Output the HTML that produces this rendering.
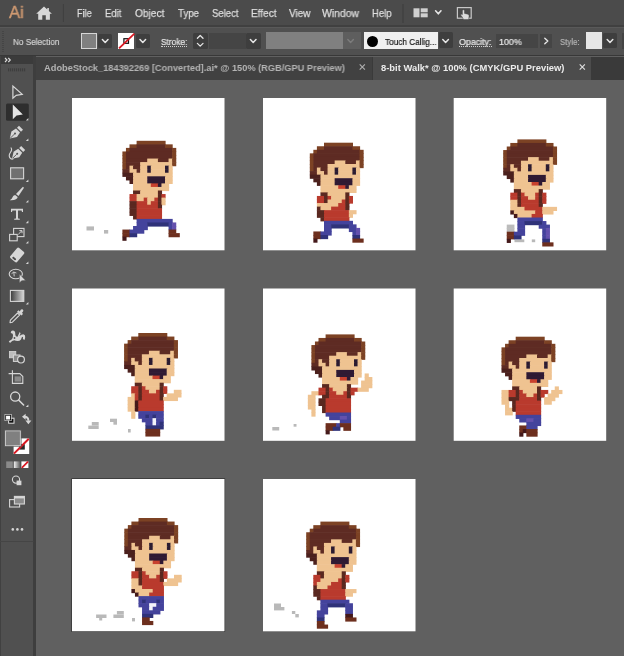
<!DOCTYPE html>
<html><head><meta charset="utf-8"><title>Illustrator</title>
<style>
html,body{margin:0;padding:0}
body{width:624px;height:656px;overflow:hidden;background:#606060;position:relative;font-family:"Liberation Sans",sans-serif}
.abs{position:absolute}
.t{position:absolute;white-space:nowrap;transform-origin:0 50%;line-height:1;will-change:transform;}
.canvas{position:absolute;left:0;top:0}
#menubar{left:0;top:0;width:624px;height:26px;background:#4b4b4b}
#mline{left:0;top:24.8px;width:624px;height:2.6px;background:#404040}
#ctrl{left:0;top:27.4px;width:624px;height:28px;background:#505050;border-top:1.4px solid #595959;box-sizing:border-box}
#cline{left:0;top:54.6px;width:624px;height:1.6px;background:#383838}
#tabbar{left:35px;top:56.5px;width:589px;height:23px;background:#3a3a3a}
#tab1{left:35px;top:56.5px;width:336.5px;height:23px;background:#414141}
#tab2{left:372.5px;top:56.5px;width:218px;height:23px;background:#4c4c4c}
#tools{left:0;top:56px;width:34px;height:600px;background:#505050}
#toolhdr{left:0;top:56px;width:34px;height:8px;background:#3b3b3b}
#toolbrd{left:33.3px;top:56px;width:2.3px;height:600px;background:#3e3e3e}
#tooledge{left:0;top:56px;width:1px;height:600px;background:#414141}
.dd{position:absolute;background:#3e3e3e;border-radius:1.5px}
.inp{position:absolute;background:#454545}
</style></head><body>
<svg class="canvas" style="filter:blur(0.35px)" width="624" height="656" viewBox="0 0 624 656" shape-rendering="geometricPrecision">
<rect x="72" y="98" width="152.5" height="152.3" fill="#ffffff"/>
<rect x="263" y="98" width="152.5" height="152.3" fill="#ffffff"/>
<rect x="453.7" y="98" width="152.5" height="152.3" fill="#ffffff"/>
<rect x="72" y="288.5" width="152.5" height="152.3" fill="#ffffff"/>
<rect x="263" y="288.5" width="152.5" height="152.3" fill="#ffffff"/>
<rect x="453.7" y="288.5" width="152.5" height="152.3" fill="#ffffff"/>
<rect x="71.4" y="478.4" width="153.7" height="153.5" fill="#2a2a2a"/>
<rect x="72" y="479" width="152.5" height="152.3" fill="#ffffff"/>
<rect x="263" y="479" width="152.5" height="152.3" fill="#ffffff"/>
<rect x="86.5" y="226.4" width="7.5" height="4.1" fill="#b9b9b9"/>
<rect x="104.0" y="230.0" width="4.2" height="3.6" fill="#b9b9b9"/>
<rect x="110.0" y="418.7" width="7.0" height="3.3" fill="#b9b9b9"/>
<rect x="113.4" y="422.0" width="3.6" height="2.7" fill="#b9b9b9"/>
<rect x="91.8" y="422.0" width="6.9" height="3.6" fill="#b9b9b9"/>
<rect x="88.3" y="425.6" width="10.4" height="3.4" fill="#b9b9b9"/>
<rect x="128.0" y="429.0" width="2.7" height="3.5" fill="#b9b9b9"/>
<rect x="514.5" y="239.4" width="9.8" height="2.8" fill="#b9b9b9"/>
<rect x="531.8" y="239.4" width="3.4" height="2.8" fill="#b9b9b9"/>
<rect x="272.3" y="427.0" width="6.9" height="3.5" fill="#b9b9b9"/>
<rect x="293.6" y="424.0" width="2.9" height="2.7" fill="#b9b9b9"/>
<rect x="96.1" y="614.5" width="10.4" height="3.5" fill="#b9b9b9"/>
<rect x="99.2" y="618.0" width="3.0" height="2.5" fill="#b9b9b9"/>
<rect x="116.9" y="611.0" width="6.9" height="3.5" fill="#b9b9b9"/>
<rect x="113.4" y="614.5" width="10.4" height="3.5" fill="#b9b9b9"/>
<rect x="132.0" y="618.0" width="3.0" height="3.4" fill="#b9b9b9"/>
<rect x="274.0" y="603.5" width="7.0" height="3.5" fill="#b9b9b9"/>
<rect x="274.0" y="607.0" width="10.4" height="3.4" fill="#b9b9b9"/>
<rect x="291.9" y="611.0" width="3.4" height="3.0" fill="#b9b9b9"/>
<rect x="295.3" y="614.0" width="3.5" height="3.4" fill="#b9b9b9"/>
<rect x="136.60" y="140.80" width="29.00" height="4.15" fill="#7c4224"/>
<rect x="129.50" y="144.35" width="7.70" height="4.15" fill="#7c4224"/>
<rect x="136.60" y="144.35" width="29.00" height="4.15" fill="#5e2b23"/>
<rect x="165.00" y="144.35" width="7.70" height="4.15" fill="#7c4224"/>
<rect x="125.95" y="147.90" width="4.15" height="4.15" fill="#7c4224"/>
<rect x="129.50" y="147.90" width="43.20" height="4.15" fill="#5e2b23"/>
<rect x="172.10" y="147.90" width="4.15" height="4.15" fill="#7c4224"/>
<rect x="122.40" y="151.45" width="4.15" height="4.15" fill="#7c4224"/>
<rect x="125.95" y="151.45" width="46.75" height="4.15" fill="#5e2b23"/>
<rect x="172.10" y="151.45" width="4.15" height="4.15" fill="#7c4224"/>
<rect x="122.40" y="155.00" width="4.15" height="4.15" fill="#7c4224"/>
<rect x="125.95" y="155.00" width="46.75" height="4.15" fill="#5e2b23"/>
<rect x="172.10" y="155.00" width="4.15" height="4.15" fill="#7c4224"/>
<rect x="122.40" y="158.55" width="4.15" height="4.15" fill="#7c4224"/>
<rect x="125.95" y="158.55" width="21.90" height="4.15" fill="#5e2b23"/>
<rect x="147.25" y="158.55" width="11.25" height="4.15" fill="#efc391"/>
<rect x="157.90" y="158.55" width="11.25" height="4.15" fill="#5e2b23"/>
<rect x="168.55" y="158.55" width="4.15" height="4.15" fill="#efc391"/>
<rect x="172.10" y="158.55" width="4.15" height="4.15" fill="#7c4224"/>
<rect x="122.40" y="162.10" width="4.15" height="4.15" fill="#7c4224"/>
<rect x="125.95" y="162.10" width="14.80" height="4.15" fill="#5e2b23"/>
<rect x="140.15" y="162.10" width="32.55" height="4.15" fill="#efc391"/>
<rect x="172.10" y="162.10" width="4.15" height="4.15" fill="#7c4224"/>
<rect x="122.40" y="165.65" width="4.15" height="4.15" fill="#7c4224"/>
<rect x="125.95" y="165.65" width="4.15" height="4.15" fill="#5e2b23"/>
<rect x="129.50" y="165.65" width="4.15" height="4.15" fill="#efc391"/>
<rect x="133.05" y="165.65" width="7.70" height="4.15" fill="#5e2b23"/>
<rect x="140.15" y="165.65" width="7.70" height="4.15" fill="#efc391"/>
<rect x="147.25" y="165.65" width="4.15" height="4.15" fill="#2b1b31"/>
<rect x="150.80" y="165.65" width="14.80" height="4.15" fill="#efc391"/>
<rect x="165.00" y="165.65" width="4.15" height="4.15" fill="#2b1b31"/>
<rect x="168.55" y="165.65" width="4.15" height="4.15" fill="#efc391"/>
<rect x="122.40" y="169.20" width="7.70" height="4.15" fill="#5e2b23"/>
<rect x="129.50" y="169.20" width="7.70" height="4.15" fill="#efc391"/>
<rect x="136.60" y="169.20" width="4.15" height="4.15" fill="#5e2b23"/>
<rect x="140.15" y="169.20" width="7.70" height="4.15" fill="#efc391"/>
<rect x="147.25" y="169.20" width="4.15" height="4.15" fill="#2b1b31"/>
<rect x="150.80" y="169.20" width="14.80" height="4.15" fill="#efc391"/>
<rect x="165.00" y="169.20" width="4.15" height="4.15" fill="#2b1b31"/>
<rect x="168.55" y="169.20" width="4.15" height="4.15" fill="#efc391"/>
<rect x="122.40" y="172.75" width="11.25" height="4.15" fill="#4b201d"/>
<rect x="133.05" y="172.75" width="39.65" height="4.15" fill="#efc391"/>
<rect x="125.95" y="176.30" width="7.70" height="4.15" fill="#4b201d"/>
<rect x="133.05" y="176.30" width="14.80" height="4.15" fill="#efc391"/>
<rect x="147.25" y="176.30" width="18.35" height="4.15" fill="#2f1a33"/>
<rect x="165.00" y="176.30" width="7.70" height="4.15" fill="#efc391"/>
<rect x="129.50" y="179.85" width="4.15" height="4.15" fill="#4b201d"/>
<rect x="133.05" y="179.85" width="14.80" height="4.15" fill="#efc391"/>
<rect x="147.25" y="179.85" width="18.35" height="4.15" fill="#2f1a33"/>
<rect x="165.00" y="179.85" width="7.70" height="4.15" fill="#efc391"/>
<rect x="133.05" y="183.40" width="18.35" height="4.15" fill="#efc391"/>
<rect x="150.80" y="183.40" width="7.70" height="4.15" fill="#c8412e"/>
<rect x="157.90" y="183.40" width="4.15" height="4.15" fill="#2f1a33"/>
<rect x="161.45" y="183.40" width="7.70" height="4.15" fill="#efc391"/>
<rect x="133.05" y="186.95" width="36.10" height="4.15" fill="#efc391"/>
<rect x="133.05" y="190.50" width="7.70" height="4.15" fill="#5a2820"/>
<rect x="140.15" y="190.50" width="18.35" height="4.15" fill="#efc391"/>
<rect x="157.90" y="190.50" width="4.15" height="4.15" fill="#5a2820"/>
<rect x="129.50" y="194.05" width="7.70" height="4.15" fill="#b93a2d"/>
<rect x="136.60" y="194.05" width="21.90" height="4.15" fill="#efc391"/>
<rect x="157.90" y="194.05" width="4.15" height="4.15" fill="#5a2820"/>
<rect x="161.45" y="194.05" width="4.15" height="4.15" fill="#b93a2d"/>
<rect x="129.50" y="197.60" width="7.70" height="4.15" fill="#b93a2d"/>
<rect x="136.60" y="197.60" width="7.70" height="4.15" fill="#efc391"/>
<rect x="143.70" y="197.60" width="4.15" height="4.15" fill="#b93a2d"/>
<rect x="147.25" y="197.60" width="7.70" height="4.15" fill="#efc391"/>
<rect x="154.35" y="197.60" width="4.15" height="4.15" fill="#b93a2d"/>
<rect x="157.90" y="197.60" width="4.15" height="4.15" fill="#5a2820"/>
<rect x="161.45" y="197.60" width="4.15" height="4.15" fill="#efc391"/>
<rect x="129.50" y="201.15" width="7.70" height="4.15" fill="#5a2820"/>
<rect x="136.60" y="201.15" width="11.25" height="4.15" fill="#b93a2d"/>
<rect x="147.25" y="201.15" width="4.15" height="4.15" fill="#efc391"/>
<rect x="150.80" y="201.15" width="7.70" height="4.15" fill="#b93a2d"/>
<rect x="157.90" y="201.15" width="4.15" height="4.15" fill="#5a2820"/>
<rect x="161.45" y="201.15" width="4.15" height="4.15" fill="#efc391"/>
<rect x="129.50" y="204.70" width="7.70" height="4.15" fill="#5a2820"/>
<rect x="136.60" y="204.70" width="21.90" height="4.15" fill="#b93a2d"/>
<rect x="157.90" y="204.70" width="4.15" height="4.15" fill="#5a2820"/>
<rect x="129.50" y="208.25" width="7.70" height="4.15" fill="#5a2820"/>
<rect x="136.60" y="208.25" width="25.45" height="4.15" fill="#b93a2d"/>
<rect x="129.50" y="211.80" width="7.70" height="4.15" fill="#5a2820"/>
<rect x="136.60" y="211.80" width="25.45" height="4.15" fill="#b93a2d"/>
<rect x="133.05" y="215.35" width="4.15" height="4.15" fill="#5a2820"/>
<rect x="136.60" y="215.35" width="25.45" height="4.15" fill="#b93a2d"/>
<rect x="136.60" y="218.90" width="36.10" height="4.15" fill="#44439c"/>
<rect x="136.60" y="222.45" width="11.25" height="4.15" fill="#44439c"/>
<rect x="147.25" y="222.45" width="21.90" height="4.15" fill="#2f3279"/>
<rect x="168.55" y="222.45" width="4.15" height="4.15" fill="#44439c"/>
<rect x="172.10" y="222.45" width="4.15" height="4.15" fill="#6451ad"/>
<rect x="133.05" y="226.00" width="14.80" height="4.15" fill="#44439c"/>
<rect x="168.55" y="226.00" width="4.15" height="4.15" fill="#44439c"/>
<rect x="172.10" y="226.00" width="4.15" height="4.15" fill="#6451ad"/>
<rect x="122.40" y="229.55" width="7.70" height="4.15" fill="#6d2f1e"/>
<rect x="129.50" y="229.55" width="14.80" height="4.15" fill="#44439c"/>
<rect x="168.55" y="229.55" width="7.70" height="4.15" fill="#6d2f1e"/>
<rect x="122.40" y="233.10" width="7.70" height="4.15" fill="#6d2f1e"/>
<rect x="129.50" y="233.10" width="7.70" height="4.15" fill="#2f3279"/>
<rect x="168.55" y="233.10" width="11.25" height="4.15" fill="#6d2f1e"/>
<rect x="122.40" y="236.65" width="4.15" height="4.15" fill="#44191a"/>
<rect x="324.00" y="142.70" width="29.00" height="4.15" fill="#7c4224"/>
<rect x="316.90" y="146.25" width="7.70" height="4.15" fill="#7c4224"/>
<rect x="324.00" y="146.25" width="29.00" height="4.15" fill="#5e2b23"/>
<rect x="352.40" y="146.25" width="7.70" height="4.15" fill="#7c4224"/>
<rect x="313.35" y="149.80" width="4.15" height="4.15" fill="#7c4224"/>
<rect x="316.90" y="149.80" width="43.20" height="4.15" fill="#5e2b23"/>
<rect x="359.50" y="149.80" width="4.15" height="4.15" fill="#7c4224"/>
<rect x="309.80" y="153.35" width="4.15" height="4.15" fill="#7c4224"/>
<rect x="313.35" y="153.35" width="46.75" height="4.15" fill="#5e2b23"/>
<rect x="359.50" y="153.35" width="4.15" height="4.15" fill="#7c4224"/>
<rect x="309.80" y="156.90" width="4.15" height="4.15" fill="#7c4224"/>
<rect x="313.35" y="156.90" width="46.75" height="4.15" fill="#5e2b23"/>
<rect x="359.50" y="156.90" width="4.15" height="4.15" fill="#7c4224"/>
<rect x="309.80" y="160.45" width="4.15" height="4.15" fill="#7c4224"/>
<rect x="313.35" y="160.45" width="21.90" height="4.15" fill="#5e2b23"/>
<rect x="334.65" y="160.45" width="11.25" height="4.15" fill="#efc391"/>
<rect x="345.30" y="160.45" width="11.25" height="4.15" fill="#5e2b23"/>
<rect x="355.95" y="160.45" width="4.15" height="4.15" fill="#efc391"/>
<rect x="359.50" y="160.45" width="4.15" height="4.15" fill="#7c4224"/>
<rect x="309.80" y="164.00" width="4.15" height="4.15" fill="#7c4224"/>
<rect x="313.35" y="164.00" width="14.80" height="4.15" fill="#5e2b23"/>
<rect x="327.55" y="164.00" width="32.55" height="4.15" fill="#efc391"/>
<rect x="359.50" y="164.00" width="4.15" height="4.15" fill="#7c4224"/>
<rect x="309.80" y="167.55" width="4.15" height="4.15" fill="#7c4224"/>
<rect x="313.35" y="167.55" width="4.15" height="4.15" fill="#5e2b23"/>
<rect x="316.90" y="167.55" width="4.15" height="4.15" fill="#efc391"/>
<rect x="320.45" y="167.55" width="7.70" height="4.15" fill="#5e2b23"/>
<rect x="327.55" y="167.55" width="7.70" height="4.15" fill="#efc391"/>
<rect x="334.65" y="167.55" width="4.15" height="4.15" fill="#2b1b31"/>
<rect x="338.20" y="167.55" width="14.80" height="4.15" fill="#efc391"/>
<rect x="352.40" y="167.55" width="4.15" height="4.15" fill="#2b1b31"/>
<rect x="355.95" y="167.55" width="4.15" height="4.15" fill="#efc391"/>
<rect x="309.80" y="171.10" width="7.70" height="4.15" fill="#5e2b23"/>
<rect x="316.90" y="171.10" width="7.70" height="4.15" fill="#efc391"/>
<rect x="324.00" y="171.10" width="4.15" height="4.15" fill="#5e2b23"/>
<rect x="327.55" y="171.10" width="7.70" height="4.15" fill="#efc391"/>
<rect x="334.65" y="171.10" width="4.15" height="4.15" fill="#2b1b31"/>
<rect x="338.20" y="171.10" width="14.80" height="4.15" fill="#efc391"/>
<rect x="352.40" y="171.10" width="4.15" height="4.15" fill="#2b1b31"/>
<rect x="355.95" y="171.10" width="4.15" height="4.15" fill="#efc391"/>
<rect x="309.80" y="174.65" width="11.25" height="4.15" fill="#4b201d"/>
<rect x="320.45" y="174.65" width="39.65" height="4.15" fill="#efc391"/>
<rect x="313.35" y="178.20" width="7.70" height="4.15" fill="#4b201d"/>
<rect x="320.45" y="178.20" width="14.80" height="4.15" fill="#efc391"/>
<rect x="334.65" y="178.20" width="18.35" height="4.15" fill="#2f1a33"/>
<rect x="352.40" y="178.20" width="7.70" height="4.15" fill="#efc391"/>
<rect x="316.90" y="181.75" width="4.15" height="4.15" fill="#4b201d"/>
<rect x="320.45" y="181.75" width="14.80" height="4.15" fill="#efc391"/>
<rect x="334.65" y="181.75" width="18.35" height="4.15" fill="#2f1a33"/>
<rect x="352.40" y="181.75" width="7.70" height="4.15" fill="#efc391"/>
<rect x="320.45" y="185.30" width="18.35" height="4.15" fill="#efc391"/>
<rect x="338.20" y="185.30" width="7.70" height="4.15" fill="#c8412e"/>
<rect x="345.30" y="185.30" width="4.15" height="4.15" fill="#2f1a33"/>
<rect x="348.85" y="185.30" width="7.70" height="4.15" fill="#efc391"/>
<rect x="320.45" y="188.85" width="36.10" height="4.15" fill="#efc391"/>
<rect x="320.45" y="192.40" width="7.70" height="4.15" fill="#5a2820"/>
<rect x="327.55" y="192.40" width="18.35" height="4.15" fill="#efc391"/>
<rect x="345.30" y="192.40" width="4.15" height="4.15" fill="#5a2820"/>
<rect x="316.90" y="195.95" width="7.70" height="4.15" fill="#b93a2d"/>
<rect x="324.00" y="195.95" width="4.15" height="4.15" fill="#5a2820"/>
<rect x="327.55" y="195.95" width="4.15" height="4.15" fill="#b93a2d"/>
<rect x="331.10" y="195.95" width="14.80" height="4.15" fill="#efc391"/>
<rect x="345.30" y="195.95" width="4.15" height="4.15" fill="#5a2820"/>
<rect x="348.85" y="195.95" width="4.15" height="4.15" fill="#b93a2d"/>
<rect x="316.90" y="199.50" width="7.70" height="4.15" fill="#b93a2d"/>
<rect x="324.00" y="199.50" width="4.15" height="4.15" fill="#5a2820"/>
<rect x="327.55" y="199.50" width="14.80" height="4.15" fill="#efc391"/>
<rect x="341.75" y="199.50" width="4.15" height="4.15" fill="#b93a2d"/>
<rect x="345.30" y="199.50" width="4.15" height="4.15" fill="#5a2820"/>
<rect x="348.85" y="199.50" width="4.15" height="4.15" fill="#b93a2d"/>
<rect x="316.90" y="203.05" width="21.90" height="4.15" fill="#efc391"/>
<rect x="338.20" y="203.05" width="7.70" height="4.15" fill="#b93a2d"/>
<rect x="345.30" y="203.05" width="4.15" height="4.15" fill="#5a2820"/>
<rect x="316.90" y="206.60" width="4.15" height="4.15" fill="#5a2820"/>
<rect x="320.45" y="206.60" width="11.25" height="4.15" fill="#efc391"/>
<rect x="331.10" y="206.60" width="14.80" height="4.15" fill="#b93a2d"/>
<rect x="345.30" y="206.60" width="4.15" height="4.15" fill="#5a2820"/>
<rect x="316.90" y="210.15" width="7.70" height="4.15" fill="#5a2820"/>
<rect x="324.00" y="210.15" width="25.45" height="4.15" fill="#b93a2d"/>
<rect x="348.85" y="210.15" width="7.70" height="4.15" fill="#efc391"/>
<rect x="316.90" y="213.70" width="7.70" height="4.15" fill="#5a2820"/>
<rect x="324.00" y="213.70" width="25.45" height="4.15" fill="#b93a2d"/>
<rect x="348.85" y="213.70" width="4.15" height="4.15" fill="#efc391"/>
<rect x="320.45" y="217.25" width="4.15" height="4.15" fill="#5a2820"/>
<rect x="324.00" y="217.25" width="25.45" height="4.15" fill="#b93a2d"/>
<rect x="324.00" y="220.80" width="29.00" height="4.15" fill="#44439c"/>
<rect x="324.00" y="224.35" width="7.70" height="4.15" fill="#44439c"/>
<rect x="331.10" y="224.35" width="18.35" height="4.15" fill="#2f3279"/>
<rect x="348.85" y="224.35" width="7.70" height="4.15" fill="#44439c"/>
<rect x="324.00" y="227.90" width="7.70" height="4.15" fill="#44439c"/>
<rect x="348.85" y="227.90" width="7.70" height="4.15" fill="#44439c"/>
<rect x="355.95" y="227.90" width="4.15" height="4.15" fill="#6451ad"/>
<rect x="313.35" y="231.45" width="7.70" height="4.15" fill="#6d2f1e"/>
<rect x="320.45" y="231.45" width="11.25" height="4.15" fill="#44439c"/>
<rect x="352.40" y="231.45" width="4.15" height="4.15" fill="#44439c"/>
<rect x="355.95" y="231.45" width="4.15" height="4.15" fill="#6451ad"/>
<rect x="313.35" y="235.00" width="7.70" height="4.15" fill="#6d2f1e"/>
<rect x="320.45" y="235.00" width="7.70" height="4.15" fill="#2f3279"/>
<rect x="352.40" y="235.00" width="7.70" height="4.15" fill="#2f3279"/>
<rect x="313.35" y="238.55" width="4.15" height="4.15" fill="#44191a"/>
<rect x="352.40" y="238.55" width="11.25" height="4.15" fill="#6d2f1e"/>
<rect x="517.40" y="139.40" width="29.00" height="4.15" fill="#7c4224"/>
<rect x="510.30" y="142.95" width="7.70" height="4.15" fill="#7c4224"/>
<rect x="517.40" y="142.95" width="29.00" height="4.15" fill="#5e2b23"/>
<rect x="545.80" y="142.95" width="7.70" height="4.15" fill="#7c4224"/>
<rect x="506.75" y="146.50" width="4.15" height="4.15" fill="#7c4224"/>
<rect x="510.30" y="146.50" width="43.20" height="4.15" fill="#5e2b23"/>
<rect x="552.90" y="146.50" width="4.15" height="4.15" fill="#7c4224"/>
<rect x="503.20" y="150.05" width="4.15" height="4.15" fill="#7c4224"/>
<rect x="506.75" y="150.05" width="46.75" height="4.15" fill="#5e2b23"/>
<rect x="552.90" y="150.05" width="4.15" height="4.15" fill="#7c4224"/>
<rect x="503.20" y="153.60" width="4.15" height="4.15" fill="#7c4224"/>
<rect x="506.75" y="153.60" width="46.75" height="4.15" fill="#5e2b23"/>
<rect x="552.90" y="153.60" width="4.15" height="4.15" fill="#7c4224"/>
<rect x="503.20" y="157.15" width="4.15" height="4.15" fill="#7c4224"/>
<rect x="506.75" y="157.15" width="21.90" height="4.15" fill="#5e2b23"/>
<rect x="528.05" y="157.15" width="11.25" height="4.15" fill="#efc391"/>
<rect x="538.70" y="157.15" width="11.25" height="4.15" fill="#5e2b23"/>
<rect x="549.35" y="157.15" width="4.15" height="4.15" fill="#efc391"/>
<rect x="552.90" y="157.15" width="4.15" height="4.15" fill="#7c4224"/>
<rect x="503.20" y="160.70" width="4.15" height="4.15" fill="#7c4224"/>
<rect x="506.75" y="160.70" width="14.80" height="4.15" fill="#5e2b23"/>
<rect x="520.95" y="160.70" width="32.55" height="4.15" fill="#efc391"/>
<rect x="552.90" y="160.70" width="4.15" height="4.15" fill="#7c4224"/>
<rect x="503.20" y="164.25" width="4.15" height="4.15" fill="#7c4224"/>
<rect x="506.75" y="164.25" width="4.15" height="4.15" fill="#5e2b23"/>
<rect x="510.30" y="164.25" width="4.15" height="4.15" fill="#efc391"/>
<rect x="513.85" y="164.25" width="7.70" height="4.15" fill="#5e2b23"/>
<rect x="520.95" y="164.25" width="7.70" height="4.15" fill="#efc391"/>
<rect x="528.05" y="164.25" width="4.15" height="4.15" fill="#2b1b31"/>
<rect x="531.60" y="164.25" width="14.80" height="4.15" fill="#efc391"/>
<rect x="545.80" y="164.25" width="4.15" height="4.15" fill="#2b1b31"/>
<rect x="549.35" y="164.25" width="4.15" height="4.15" fill="#efc391"/>
<rect x="503.20" y="167.80" width="7.70" height="4.15" fill="#5e2b23"/>
<rect x="510.30" y="167.80" width="7.70" height="4.15" fill="#efc391"/>
<rect x="517.40" y="167.80" width="4.15" height="4.15" fill="#5e2b23"/>
<rect x="520.95" y="167.80" width="7.70" height="4.15" fill="#efc391"/>
<rect x="528.05" y="167.80" width="4.15" height="4.15" fill="#2b1b31"/>
<rect x="531.60" y="167.80" width="14.80" height="4.15" fill="#efc391"/>
<rect x="545.80" y="167.80" width="4.15" height="4.15" fill="#2b1b31"/>
<rect x="549.35" y="167.80" width="4.15" height="4.15" fill="#efc391"/>
<rect x="503.20" y="171.35" width="11.25" height="4.15" fill="#4b201d"/>
<rect x="513.85" y="171.35" width="39.65" height="4.15" fill="#efc391"/>
<rect x="506.75" y="174.90" width="7.70" height="4.15" fill="#4b201d"/>
<rect x="513.85" y="174.90" width="14.80" height="4.15" fill="#efc391"/>
<rect x="528.05" y="174.90" width="18.35" height="4.15" fill="#2f1a33"/>
<rect x="545.80" y="174.90" width="7.70" height="4.15" fill="#efc391"/>
<rect x="510.30" y="178.45" width="4.15" height="4.15" fill="#4b201d"/>
<rect x="513.85" y="178.45" width="14.80" height="4.15" fill="#efc391"/>
<rect x="528.05" y="178.45" width="18.35" height="4.15" fill="#2f1a33"/>
<rect x="545.80" y="178.45" width="7.70" height="4.15" fill="#efc391"/>
<rect x="513.85" y="182.00" width="18.35" height="4.15" fill="#efc391"/>
<rect x="531.60" y="182.00" width="7.70" height="4.15" fill="#c8412e"/>
<rect x="538.70" y="182.00" width="4.15" height="4.15" fill="#2f1a33"/>
<rect x="542.25" y="182.00" width="7.70" height="4.15" fill="#efc391"/>
<rect x="513.85" y="185.55" width="36.10" height="4.15" fill="#efc391"/>
<rect x="513.85" y="189.10" width="7.70" height="4.15" fill="#5a2820"/>
<rect x="520.95" y="189.10" width="18.35" height="4.15" fill="#efc391"/>
<rect x="538.70" y="189.10" width="4.15" height="4.15" fill="#5a2820"/>
<rect x="510.30" y="192.65" width="7.70" height="4.15" fill="#b93a2d"/>
<rect x="517.40" y="192.65" width="4.15" height="4.15" fill="#5a2820"/>
<rect x="520.95" y="192.65" width="4.15" height="4.15" fill="#b93a2d"/>
<rect x="524.50" y="192.65" width="11.25" height="4.15" fill="#efc391"/>
<rect x="535.15" y="192.65" width="4.15" height="4.15" fill="#b93a2d"/>
<rect x="538.70" y="192.65" width="4.15" height="4.15" fill="#5a2820"/>
<rect x="542.25" y="192.65" width="4.15" height="4.15" fill="#b93a2d"/>
<rect x="510.30" y="196.20" width="7.70" height="4.15" fill="#b93a2d"/>
<rect x="517.40" y="196.20" width="4.15" height="4.15" fill="#5a2820"/>
<rect x="520.95" y="196.20" width="7.70" height="4.15" fill="#b93a2d"/>
<rect x="528.05" y="196.20" width="7.70" height="4.15" fill="#efc391"/>
<rect x="535.15" y="196.20" width="4.15" height="4.15" fill="#b93a2d"/>
<rect x="538.70" y="196.20" width="4.15" height="4.15" fill="#5a2820"/>
<rect x="542.25" y="196.20" width="4.15" height="4.15" fill="#b93a2d"/>
<rect x="510.30" y="199.75" width="7.70" height="4.15" fill="#efc391"/>
<rect x="517.40" y="199.75" width="4.15" height="4.15" fill="#5a2820"/>
<rect x="520.95" y="199.75" width="18.35" height="4.15" fill="#b93a2d"/>
<rect x="538.70" y="199.75" width="4.15" height="4.15" fill="#5a2820"/>
<rect x="542.25" y="199.75" width="4.15" height="4.15" fill="#b93a2d"/>
<rect x="510.30" y="203.30" width="7.70" height="4.15" fill="#efc391"/>
<rect x="517.40" y="203.30" width="4.15" height="4.15" fill="#5a2820"/>
<rect x="520.95" y="203.30" width="18.35" height="4.15" fill="#b93a2d"/>
<rect x="538.70" y="203.30" width="4.15" height="4.15" fill="#5a2820"/>
<rect x="510.30" y="206.85" width="14.80" height="4.15" fill="#efc391"/>
<rect x="524.50" y="206.85" width="18.35" height="4.15" fill="#b93a2d"/>
<rect x="542.25" y="206.85" width="14.80" height="4.15" fill="#efc391"/>
<rect x="510.30" y="210.40" width="4.15" height="4.15" fill="#44191a"/>
<rect x="513.85" y="210.40" width="21.90" height="4.15" fill="#efc391"/>
<rect x="535.15" y="210.40" width="7.70" height="4.15" fill="#b93a2d"/>
<rect x="542.25" y="210.40" width="11.25" height="4.15" fill="#efc391"/>
<rect x="513.85" y="213.95" width="4.15" height="4.15" fill="#44191a"/>
<rect x="517.40" y="213.95" width="14.80" height="4.15" fill="#efc391"/>
<rect x="531.60" y="213.95" width="11.25" height="4.15" fill="#b93a2d"/>
<rect x="517.40" y="217.50" width="25.45" height="4.15" fill="#44439c"/>
<rect x="517.40" y="221.05" width="7.70" height="4.15" fill="#44439c"/>
<rect x="524.50" y="221.05" width="18.35" height="4.15" fill="#2f3279"/>
<rect x="542.25" y="221.05" width="4.15" height="4.15" fill="#44439c"/>
<rect x="506.75" y="224.60" width="7.70" height="4.15" fill="#bcbcbc"/>
<rect x="517.40" y="224.60" width="7.70" height="4.15" fill="#44439c"/>
<rect x="538.70" y="224.60" width="11.25" height="4.15" fill="#44439c"/>
<rect x="506.75" y="228.15" width="7.70" height="4.15" fill="#bcbcbc"/>
<rect x="517.40" y="228.15" width="7.70" height="4.15" fill="#44439c"/>
<rect x="542.25" y="228.15" width="4.15" height="4.15" fill="#44439c"/>
<rect x="545.80" y="228.15" width="4.15" height="4.15" fill="#6451ad"/>
<rect x="506.75" y="231.70" width="7.70" height="4.15" fill="#6d2f1e"/>
<rect x="513.85" y="231.70" width="11.25" height="4.15" fill="#44439c"/>
<rect x="542.25" y="231.70" width="4.15" height="4.15" fill="#44439c"/>
<rect x="545.80" y="231.70" width="4.15" height="4.15" fill="#6451ad"/>
<rect x="506.75" y="235.25" width="7.70" height="4.15" fill="#6d2f1e"/>
<rect x="513.85" y="235.25" width="7.70" height="4.15" fill="#2f3279"/>
<rect x="542.25" y="235.25" width="4.15" height="4.15" fill="#44439c"/>
<rect x="545.80" y="235.25" width="4.15" height="4.15" fill="#6451ad"/>
<rect x="506.75" y="238.80" width="4.15" height="4.15" fill="#44191a"/>
<rect x="542.25" y="238.80" width="7.70" height="4.15" fill="#2f3279"/>
<rect x="542.25" y="242.35" width="11.25" height="4.15" fill="#6d2f1e"/>
<rect x="138.30" y="333.00" width="29.00" height="4.15" fill="#7c4224"/>
<rect x="131.20" y="336.55" width="7.70" height="4.15" fill="#7c4224"/>
<rect x="138.30" y="336.55" width="29.00" height="4.15" fill="#5e2b23"/>
<rect x="166.70" y="336.55" width="7.70" height="4.15" fill="#7c4224"/>
<rect x="127.65" y="340.10" width="4.15" height="4.15" fill="#7c4224"/>
<rect x="131.20" y="340.10" width="43.20" height="4.15" fill="#5e2b23"/>
<rect x="173.80" y="340.10" width="4.15" height="4.15" fill="#7c4224"/>
<rect x="124.10" y="343.65" width="4.15" height="4.15" fill="#7c4224"/>
<rect x="127.65" y="343.65" width="46.75" height="4.15" fill="#5e2b23"/>
<rect x="173.80" y="343.65" width="4.15" height="4.15" fill="#7c4224"/>
<rect x="124.10" y="347.20" width="4.15" height="4.15" fill="#7c4224"/>
<rect x="127.65" y="347.20" width="46.75" height="4.15" fill="#5e2b23"/>
<rect x="173.80" y="347.20" width="4.15" height="4.15" fill="#7c4224"/>
<rect x="124.10" y="350.75" width="4.15" height="4.15" fill="#7c4224"/>
<rect x="127.65" y="350.75" width="21.90" height="4.15" fill="#5e2b23"/>
<rect x="148.95" y="350.75" width="11.25" height="4.15" fill="#efc391"/>
<rect x="159.60" y="350.75" width="11.25" height="4.15" fill="#5e2b23"/>
<rect x="170.25" y="350.75" width="4.15" height="4.15" fill="#efc391"/>
<rect x="173.80" y="350.75" width="4.15" height="4.15" fill="#7c4224"/>
<rect x="124.10" y="354.30" width="4.15" height="4.15" fill="#7c4224"/>
<rect x="127.65" y="354.30" width="14.80" height="4.15" fill="#5e2b23"/>
<rect x="141.85" y="354.30" width="32.55" height="4.15" fill="#efc391"/>
<rect x="173.80" y="354.30" width="4.15" height="4.15" fill="#7c4224"/>
<rect x="124.10" y="357.85" width="4.15" height="4.15" fill="#7c4224"/>
<rect x="127.65" y="357.85" width="4.15" height="4.15" fill="#5e2b23"/>
<rect x="131.20" y="357.85" width="4.15" height="4.15" fill="#efc391"/>
<rect x="134.75" y="357.85" width="7.70" height="4.15" fill="#5e2b23"/>
<rect x="141.85" y="357.85" width="7.70" height="4.15" fill="#efc391"/>
<rect x="148.95" y="357.85" width="4.15" height="4.15" fill="#2b1b31"/>
<rect x="152.50" y="357.85" width="14.80" height="4.15" fill="#efc391"/>
<rect x="166.70" y="357.85" width="4.15" height="4.15" fill="#2b1b31"/>
<rect x="170.25" y="357.85" width="4.15" height="4.15" fill="#efc391"/>
<rect x="124.10" y="361.40" width="7.70" height="4.15" fill="#5e2b23"/>
<rect x="131.20" y="361.40" width="7.70" height="4.15" fill="#efc391"/>
<rect x="138.30" y="361.40" width="4.15" height="4.15" fill="#5e2b23"/>
<rect x="141.85" y="361.40" width="7.70" height="4.15" fill="#efc391"/>
<rect x="148.95" y="361.40" width="4.15" height="4.15" fill="#2b1b31"/>
<rect x="152.50" y="361.40" width="14.80" height="4.15" fill="#efc391"/>
<rect x="166.70" y="361.40" width="4.15" height="4.15" fill="#2b1b31"/>
<rect x="170.25" y="361.40" width="4.15" height="4.15" fill="#efc391"/>
<rect x="124.10" y="364.95" width="11.25" height="4.15" fill="#4b201d"/>
<rect x="134.75" y="364.95" width="39.65" height="4.15" fill="#efc391"/>
<rect x="127.65" y="368.50" width="7.70" height="4.15" fill="#4b201d"/>
<rect x="134.75" y="368.50" width="14.80" height="4.15" fill="#efc391"/>
<rect x="148.95" y="368.50" width="18.35" height="4.15" fill="#2f1a33"/>
<rect x="166.70" y="368.50" width="7.70" height="4.15" fill="#efc391"/>
<rect x="131.20" y="372.05" width="4.15" height="4.15" fill="#4b201d"/>
<rect x="134.75" y="372.05" width="14.80" height="4.15" fill="#efc391"/>
<rect x="148.95" y="372.05" width="18.35" height="4.15" fill="#2f1a33"/>
<rect x="166.70" y="372.05" width="7.70" height="4.15" fill="#efc391"/>
<rect x="134.75" y="375.60" width="18.35" height="4.15" fill="#efc391"/>
<rect x="152.50" y="375.60" width="7.70" height="4.15" fill="#c8412e"/>
<rect x="159.60" y="375.60" width="4.15" height="4.15" fill="#2f1a33"/>
<rect x="163.15" y="375.60" width="7.70" height="4.15" fill="#efc391"/>
<rect x="134.75" y="379.15" width="36.10" height="4.15" fill="#efc391"/>
<rect x="134.75" y="382.70" width="7.70" height="4.15" fill="#5a2820"/>
<rect x="141.85" y="382.70" width="18.35" height="4.15" fill="#efc391"/>
<rect x="159.60" y="382.70" width="4.15" height="4.15" fill="#5a2820"/>
<rect x="131.20" y="386.25" width="7.70" height="4.15" fill="#b93a2d"/>
<rect x="138.30" y="386.25" width="4.15" height="4.15" fill="#5a2820"/>
<rect x="141.85" y="386.25" width="4.15" height="4.15" fill="#b93a2d"/>
<rect x="145.40" y="386.25" width="14.80" height="4.15" fill="#efc391"/>
<rect x="159.60" y="386.25" width="4.15" height="4.15" fill="#5a2820"/>
<rect x="163.15" y="386.25" width="4.15" height="4.15" fill="#b93a2d"/>
<rect x="131.20" y="389.80" width="7.70" height="4.15" fill="#b93a2d"/>
<rect x="138.30" y="389.80" width="4.15" height="4.15" fill="#5a2820"/>
<rect x="141.85" y="389.80" width="7.70" height="4.15" fill="#b93a2d"/>
<rect x="148.95" y="389.80" width="7.70" height="4.15" fill="#efc391"/>
<rect x="156.05" y="389.80" width="4.15" height="4.15" fill="#b93a2d"/>
<rect x="159.60" y="389.80" width="4.15" height="4.15" fill="#5a2820"/>
<rect x="163.15" y="389.80" width="4.15" height="4.15" fill="#b93a2d"/>
<rect x="173.80" y="389.80" width="7.70" height="4.15" fill="#efc391"/>
<rect x="131.20" y="393.35" width="4.15" height="4.15" fill="#efc391"/>
<rect x="134.75" y="393.35" width="4.15" height="4.15" fill="#b93a2d"/>
<rect x="138.30" y="393.35" width="4.15" height="4.15" fill="#5a2820"/>
<rect x="141.85" y="393.35" width="18.35" height="4.15" fill="#b93a2d"/>
<rect x="159.60" y="393.35" width="4.15" height="4.15" fill="#5a2820"/>
<rect x="166.70" y="393.35" width="14.80" height="4.15" fill="#efc391"/>
<rect x="127.65" y="396.90" width="7.70" height="4.15" fill="#efc391"/>
<rect x="134.75" y="396.90" width="4.15" height="4.15" fill="#b93a2d"/>
<rect x="138.30" y="396.90" width="4.15" height="4.15" fill="#5a2820"/>
<rect x="141.85" y="396.90" width="18.35" height="4.15" fill="#b93a2d"/>
<rect x="159.60" y="396.90" width="4.15" height="4.15" fill="#5a2820"/>
<rect x="163.15" y="396.90" width="14.80" height="4.15" fill="#efc391"/>
<rect x="127.65" y="400.45" width="7.70" height="4.15" fill="#efc391"/>
<rect x="134.75" y="400.45" width="4.15" height="4.15" fill="#44191a"/>
<rect x="138.30" y="400.45" width="25.45" height="4.15" fill="#b93a2d"/>
<rect x="127.65" y="404.00" width="7.70" height="4.15" fill="#efc391"/>
<rect x="134.75" y="404.00" width="4.15" height="4.15" fill="#44191a"/>
<rect x="138.30" y="404.00" width="25.45" height="4.15" fill="#b93a2d"/>
<rect x="127.65" y="407.55" width="7.70" height="4.15" fill="#efc391"/>
<rect x="134.75" y="407.55" width="4.15" height="4.15" fill="#44191a"/>
<rect x="138.30" y="407.55" width="25.45" height="4.15" fill="#b93a2d"/>
<rect x="131.20" y="411.10" width="4.15" height="4.15" fill="#efc391"/>
<rect x="138.30" y="411.10" width="25.45" height="4.15" fill="#44439c"/>
<rect x="131.20" y="414.65" width="4.15" height="4.15" fill="#efc391"/>
<rect x="138.30" y="414.65" width="7.70" height="4.15" fill="#44439c"/>
<rect x="145.40" y="414.65" width="4.15" height="4.15" fill="#2f3279"/>
<rect x="148.95" y="414.65" width="4.15" height="4.15" fill="#44439c"/>
<rect x="152.50" y="414.65" width="4.15" height="4.15" fill="#2f3279"/>
<rect x="156.05" y="414.65" width="7.70" height="4.15" fill="#44439c"/>
<rect x="141.85" y="418.20" width="11.25" height="4.15" fill="#44439c"/>
<rect x="152.50" y="418.20" width="4.15" height="4.15" fill="#f4f4fa"/>
<rect x="156.05" y="418.20" width="7.70" height="4.15" fill="#44439c"/>
<rect x="145.40" y="421.75" width="7.70" height="4.15" fill="#44439c"/>
<rect x="152.50" y="421.75" width="4.15" height="4.15" fill="#f4f4fa"/>
<rect x="156.05" y="421.75" width="4.15" height="4.15" fill="#44439c"/>
<rect x="159.60" y="421.75" width="4.15" height="4.15" fill="#2f3279"/>
<rect x="145.40" y="425.30" width="18.35" height="4.15" fill="#2f3279"/>
<rect x="145.40" y="428.85" width="14.80" height="4.15" fill="#6d2f1e"/>
<rect x="145.40" y="432.40" width="14.80" height="4.15" fill="#6d2f1e"/>
<rect x="325.60" y="334.40" width="29.00" height="4.15" fill="#7c4224"/>
<rect x="318.50" y="337.95" width="7.70" height="4.15" fill="#7c4224"/>
<rect x="325.60" y="337.95" width="29.00" height="4.15" fill="#5e2b23"/>
<rect x="354.00" y="337.95" width="7.70" height="4.15" fill="#7c4224"/>
<rect x="314.95" y="341.50" width="4.15" height="4.15" fill="#7c4224"/>
<rect x="318.50" y="341.50" width="43.20" height="4.15" fill="#5e2b23"/>
<rect x="361.10" y="341.50" width="4.15" height="4.15" fill="#7c4224"/>
<rect x="311.40" y="345.05" width="4.15" height="4.15" fill="#7c4224"/>
<rect x="314.95" y="345.05" width="46.75" height="4.15" fill="#5e2b23"/>
<rect x="361.10" y="345.05" width="4.15" height="4.15" fill="#7c4224"/>
<rect x="311.40" y="348.60" width="4.15" height="4.15" fill="#7c4224"/>
<rect x="314.95" y="348.60" width="46.75" height="4.15" fill="#5e2b23"/>
<rect x="361.10" y="348.60" width="4.15" height="4.15" fill="#7c4224"/>
<rect x="311.40" y="352.15" width="4.15" height="4.15" fill="#7c4224"/>
<rect x="314.95" y="352.15" width="21.90" height="4.15" fill="#5e2b23"/>
<rect x="336.25" y="352.15" width="11.25" height="4.15" fill="#efc391"/>
<rect x="346.90" y="352.15" width="11.25" height="4.15" fill="#5e2b23"/>
<rect x="357.55" y="352.15" width="4.15" height="4.15" fill="#efc391"/>
<rect x="361.10" y="352.15" width="4.15" height="4.15" fill="#7c4224"/>
<rect x="311.40" y="355.70" width="4.15" height="4.15" fill="#7c4224"/>
<rect x="314.95" y="355.70" width="14.80" height="4.15" fill="#5e2b23"/>
<rect x="329.15" y="355.70" width="32.55" height="4.15" fill="#efc391"/>
<rect x="361.10" y="355.70" width="4.15" height="4.15" fill="#7c4224"/>
<rect x="311.40" y="359.25" width="4.15" height="4.15" fill="#7c4224"/>
<rect x="314.95" y="359.25" width="4.15" height="4.15" fill="#5e2b23"/>
<rect x="318.50" y="359.25" width="4.15" height="4.15" fill="#efc391"/>
<rect x="322.05" y="359.25" width="7.70" height="4.15" fill="#5e2b23"/>
<rect x="329.15" y="359.25" width="7.70" height="4.15" fill="#efc391"/>
<rect x="336.25" y="359.25" width="4.15" height="4.15" fill="#2b1b31"/>
<rect x="339.80" y="359.25" width="14.80" height="4.15" fill="#efc391"/>
<rect x="354.00" y="359.25" width="4.15" height="4.15" fill="#2b1b31"/>
<rect x="357.55" y="359.25" width="4.15" height="4.15" fill="#efc391"/>
<rect x="311.40" y="362.80" width="7.70" height="4.15" fill="#5e2b23"/>
<rect x="318.50" y="362.80" width="7.70" height="4.15" fill="#efc391"/>
<rect x="325.60" y="362.80" width="4.15" height="4.15" fill="#5e2b23"/>
<rect x="329.15" y="362.80" width="7.70" height="4.15" fill="#efc391"/>
<rect x="336.25" y="362.80" width="4.15" height="4.15" fill="#2b1b31"/>
<rect x="339.80" y="362.80" width="14.80" height="4.15" fill="#efc391"/>
<rect x="354.00" y="362.80" width="4.15" height="4.15" fill="#2b1b31"/>
<rect x="357.55" y="362.80" width="4.15" height="4.15" fill="#efc391"/>
<rect x="311.40" y="366.35" width="11.25" height="4.15" fill="#4b201d"/>
<rect x="322.05" y="366.35" width="39.65" height="4.15" fill="#efc391"/>
<rect x="314.95" y="369.90" width="7.70" height="4.15" fill="#4b201d"/>
<rect x="322.05" y="369.90" width="14.80" height="4.15" fill="#efc391"/>
<rect x="336.25" y="369.90" width="18.35" height="4.15" fill="#2f1a33"/>
<rect x="354.00" y="369.90" width="7.70" height="4.15" fill="#efc391"/>
<rect x="318.50" y="373.45" width="4.15" height="4.15" fill="#4b201d"/>
<rect x="322.05" y="373.45" width="14.80" height="4.15" fill="#efc391"/>
<rect x="336.25" y="373.45" width="18.35" height="4.15" fill="#2f1a33"/>
<rect x="354.00" y="373.45" width="7.70" height="4.15" fill="#efc391"/>
<rect x="364.65" y="373.45" width="4.15" height="4.15" fill="#efc391"/>
<rect x="322.05" y="377.00" width="18.35" height="4.15" fill="#efc391"/>
<rect x="339.80" y="377.00" width="7.70" height="4.15" fill="#c8412e"/>
<rect x="346.90" y="377.00" width="4.15" height="4.15" fill="#2f1a33"/>
<rect x="350.45" y="377.00" width="7.70" height="4.15" fill="#efc391"/>
<rect x="364.65" y="377.00" width="7.70" height="4.15" fill="#efc391"/>
<rect x="322.05" y="380.55" width="36.10" height="4.15" fill="#efc391"/>
<rect x="361.10" y="380.55" width="11.25" height="4.15" fill="#efc391"/>
<rect x="322.05" y="384.10" width="7.70" height="4.15" fill="#5a2820"/>
<rect x="329.15" y="384.10" width="18.35" height="4.15" fill="#efc391"/>
<rect x="346.90" y="384.10" width="4.15" height="4.15" fill="#5a2820"/>
<rect x="361.10" y="384.10" width="11.25" height="4.15" fill="#efc391"/>
<rect x="318.50" y="387.65" width="7.70" height="4.15" fill="#b93a2d"/>
<rect x="325.60" y="387.65" width="4.15" height="4.15" fill="#5a2820"/>
<rect x="329.15" y="387.65" width="4.15" height="4.15" fill="#b93a2d"/>
<rect x="332.70" y="387.65" width="14.80" height="4.15" fill="#efc391"/>
<rect x="346.90" y="387.65" width="4.15" height="4.15" fill="#5a2820"/>
<rect x="350.45" y="387.65" width="7.70" height="4.15" fill="#b93a2d"/>
<rect x="357.55" y="387.65" width="11.25" height="4.15" fill="#efc391"/>
<rect x="311.40" y="391.20" width="7.70" height="4.15" fill="#efc391"/>
<rect x="318.50" y="391.20" width="7.70" height="4.15" fill="#b93a2d"/>
<rect x="325.60" y="391.20" width="4.15" height="4.15" fill="#5a2820"/>
<rect x="329.15" y="391.20" width="7.70" height="4.15" fill="#b93a2d"/>
<rect x="336.25" y="391.20" width="7.70" height="4.15" fill="#efc391"/>
<rect x="343.35" y="391.20" width="4.15" height="4.15" fill="#b93a2d"/>
<rect x="346.90" y="391.20" width="4.15" height="4.15" fill="#5a2820"/>
<rect x="350.45" y="391.20" width="4.15" height="4.15" fill="#b93a2d"/>
<rect x="307.85" y="394.75" width="7.70" height="4.15" fill="#efc391"/>
<rect x="322.05" y="394.75" width="7.70" height="4.15" fill="#5a2820"/>
<rect x="329.15" y="394.75" width="18.35" height="4.15" fill="#b93a2d"/>
<rect x="346.90" y="394.75" width="4.15" height="4.15" fill="#5a2820"/>
<rect x="307.85" y="398.30" width="7.70" height="4.15" fill="#efc391"/>
<rect x="318.50" y="398.30" width="7.70" height="4.15" fill="#5a2820"/>
<rect x="325.60" y="398.30" width="25.45" height="4.15" fill="#b93a2d"/>
<rect x="307.85" y="401.85" width="7.70" height="4.15" fill="#efc391"/>
<rect x="318.50" y="401.85" width="7.70" height="4.15" fill="#5a2820"/>
<rect x="325.60" y="401.85" width="25.45" height="4.15" fill="#b93a2d"/>
<rect x="307.85" y="405.40" width="7.70" height="4.15" fill="#efc391"/>
<rect x="322.05" y="405.40" width="4.15" height="4.15" fill="#5a2820"/>
<rect x="325.60" y="405.40" width="25.45" height="4.15" fill="#b93a2d"/>
<rect x="311.40" y="408.95" width="4.15" height="4.15" fill="#efc391"/>
<rect x="322.05" y="408.95" width="4.15" height="4.15" fill="#5a2820"/>
<rect x="325.60" y="408.95" width="25.45" height="4.15" fill="#b93a2d"/>
<rect x="311.40" y="412.50" width="4.15" height="4.15" fill="#efc391"/>
<rect x="325.60" y="412.50" width="25.45" height="4.15" fill="#44439c"/>
<rect x="329.15" y="416.05" width="11.25" height="4.15" fill="#44439c"/>
<rect x="339.80" y="416.05" width="7.70" height="4.15" fill="#6451ad"/>
<rect x="346.90" y="416.05" width="4.15" height="4.15" fill="#44439c"/>
<rect x="339.80" y="419.60" width="11.25" height="4.15" fill="#44439c"/>
<rect x="325.60" y="423.15" width="11.25" height="4.15" fill="#6d2f1e"/>
<rect x="336.25" y="423.15" width="4.15" height="4.15" fill="#44439c"/>
<rect x="339.80" y="423.15" width="11.25" height="4.15" fill="#6d2f1e"/>
<rect x="325.60" y="426.70" width="7.70" height="4.15" fill="#6d2f1e"/>
<rect x="332.70" y="426.70" width="7.70" height="4.15" fill="#2f3279"/>
<rect x="343.35" y="426.70" width="7.70" height="4.15" fill="#6d2f1e"/>
<rect x="325.60" y="430.25" width="4.15" height="4.15" fill="#44191a"/>
<rect x="515.70" y="336.70" width="29.00" height="4.15" fill="#7c4224"/>
<rect x="508.60" y="340.25" width="7.70" height="4.15" fill="#7c4224"/>
<rect x="515.70" y="340.25" width="29.00" height="4.15" fill="#5e2b23"/>
<rect x="544.10" y="340.25" width="7.70" height="4.15" fill="#7c4224"/>
<rect x="505.05" y="343.80" width="4.15" height="4.15" fill="#7c4224"/>
<rect x="508.60" y="343.80" width="43.20" height="4.15" fill="#5e2b23"/>
<rect x="551.20" y="343.80" width="4.15" height="4.15" fill="#7c4224"/>
<rect x="501.50" y="347.35" width="4.15" height="4.15" fill="#7c4224"/>
<rect x="505.05" y="347.35" width="46.75" height="4.15" fill="#5e2b23"/>
<rect x="551.20" y="347.35" width="4.15" height="4.15" fill="#7c4224"/>
<rect x="501.50" y="350.90" width="4.15" height="4.15" fill="#7c4224"/>
<rect x="505.05" y="350.90" width="46.75" height="4.15" fill="#5e2b23"/>
<rect x="551.20" y="350.90" width="4.15" height="4.15" fill="#7c4224"/>
<rect x="501.50" y="354.45" width="4.15" height="4.15" fill="#7c4224"/>
<rect x="505.05" y="354.45" width="21.90" height="4.15" fill="#5e2b23"/>
<rect x="526.35" y="354.45" width="11.25" height="4.15" fill="#efc391"/>
<rect x="537.00" y="354.45" width="11.25" height="4.15" fill="#5e2b23"/>
<rect x="547.65" y="354.45" width="4.15" height="4.15" fill="#efc391"/>
<rect x="551.20" y="354.45" width="4.15" height="4.15" fill="#7c4224"/>
<rect x="501.50" y="358.00" width="4.15" height="4.15" fill="#7c4224"/>
<rect x="505.05" y="358.00" width="14.80" height="4.15" fill="#5e2b23"/>
<rect x="519.25" y="358.00" width="32.55" height="4.15" fill="#efc391"/>
<rect x="551.20" y="358.00" width="4.15" height="4.15" fill="#7c4224"/>
<rect x="501.50" y="361.55" width="4.15" height="4.15" fill="#7c4224"/>
<rect x="505.05" y="361.55" width="4.15" height="4.15" fill="#5e2b23"/>
<rect x="508.60" y="361.55" width="4.15" height="4.15" fill="#efc391"/>
<rect x="512.15" y="361.55" width="7.70" height="4.15" fill="#5e2b23"/>
<rect x="519.25" y="361.55" width="7.70" height="4.15" fill="#efc391"/>
<rect x="526.35" y="361.55" width="4.15" height="4.15" fill="#2b1b31"/>
<rect x="529.90" y="361.55" width="14.80" height="4.15" fill="#efc391"/>
<rect x="544.10" y="361.55" width="4.15" height="4.15" fill="#2b1b31"/>
<rect x="547.65" y="361.55" width="4.15" height="4.15" fill="#efc391"/>
<rect x="501.50" y="365.10" width="7.70" height="4.15" fill="#5e2b23"/>
<rect x="508.60" y="365.10" width="7.70" height="4.15" fill="#efc391"/>
<rect x="515.70" y="365.10" width="4.15" height="4.15" fill="#5e2b23"/>
<rect x="519.25" y="365.10" width="7.70" height="4.15" fill="#efc391"/>
<rect x="526.35" y="365.10" width="4.15" height="4.15" fill="#2b1b31"/>
<rect x="529.90" y="365.10" width="14.80" height="4.15" fill="#efc391"/>
<rect x="544.10" y="365.10" width="4.15" height="4.15" fill="#2b1b31"/>
<rect x="547.65" y="365.10" width="4.15" height="4.15" fill="#efc391"/>
<rect x="501.50" y="368.65" width="11.25" height="4.15" fill="#4b201d"/>
<rect x="512.15" y="368.65" width="39.65" height="4.15" fill="#efc391"/>
<rect x="505.05" y="372.20" width="7.70" height="4.15" fill="#4b201d"/>
<rect x="512.15" y="372.20" width="14.80" height="4.15" fill="#efc391"/>
<rect x="526.35" y="372.20" width="18.35" height="4.15" fill="#2f1a33"/>
<rect x="544.10" y="372.20" width="7.70" height="4.15" fill="#efc391"/>
<rect x="508.60" y="375.75" width="4.15" height="4.15" fill="#4b201d"/>
<rect x="512.15" y="375.75" width="14.80" height="4.15" fill="#efc391"/>
<rect x="526.35" y="375.75" width="18.35" height="4.15" fill="#2f1a33"/>
<rect x="544.10" y="375.75" width="7.70" height="4.15" fill="#efc391"/>
<rect x="512.15" y="379.30" width="18.35" height="4.15" fill="#efc391"/>
<rect x="529.90" y="379.30" width="7.70" height="4.15" fill="#c8412e"/>
<rect x="537.00" y="379.30" width="4.15" height="4.15" fill="#2f1a33"/>
<rect x="540.55" y="379.30" width="7.70" height="4.15" fill="#efc391"/>
<rect x="512.15" y="382.85" width="36.10" height="4.15" fill="#efc391"/>
<rect x="512.15" y="386.40" width="7.70" height="4.15" fill="#5a2820"/>
<rect x="519.25" y="386.40" width="18.35" height="4.15" fill="#efc391"/>
<rect x="537.00" y="386.40" width="4.15" height="4.15" fill="#5a2820"/>
<rect x="554.75" y="386.40" width="4.15" height="4.15" fill="#efc391"/>
<rect x="501.50" y="389.95" width="7.70" height="4.15" fill="#efc391"/>
<rect x="508.60" y="389.95" width="7.70" height="4.15" fill="#b93a2d"/>
<rect x="515.70" y="389.95" width="4.15" height="4.15" fill="#5a2820"/>
<rect x="519.25" y="389.95" width="4.15" height="4.15" fill="#b93a2d"/>
<rect x="522.80" y="389.95" width="14.80" height="4.15" fill="#efc391"/>
<rect x="537.00" y="389.95" width="4.15" height="4.15" fill="#5a2820"/>
<rect x="540.55" y="389.95" width="7.70" height="4.15" fill="#b93a2d"/>
<rect x="551.20" y="389.95" width="11.25" height="4.15" fill="#efc391"/>
<rect x="501.50" y="393.50" width="7.70" height="4.15" fill="#efc391"/>
<rect x="508.60" y="393.50" width="7.70" height="4.15" fill="#b93a2d"/>
<rect x="515.70" y="393.50" width="4.15" height="4.15" fill="#5a2820"/>
<rect x="519.25" y="393.50" width="7.70" height="4.15" fill="#b93a2d"/>
<rect x="526.35" y="393.50" width="7.70" height="4.15" fill="#efc391"/>
<rect x="533.45" y="393.50" width="4.15" height="4.15" fill="#b93a2d"/>
<rect x="537.00" y="393.50" width="4.15" height="4.15" fill="#5a2820"/>
<rect x="540.55" y="393.50" width="4.15" height="4.15" fill="#b93a2d"/>
<rect x="547.65" y="393.50" width="11.25" height="4.15" fill="#efc391"/>
<rect x="501.50" y="397.05" width="7.70" height="4.15" fill="#efc391"/>
<rect x="508.60" y="397.05" width="11.25" height="4.15" fill="#5a2820"/>
<rect x="519.25" y="397.05" width="18.35" height="4.15" fill="#b93a2d"/>
<rect x="537.00" y="397.05" width="4.15" height="4.15" fill="#5a2820"/>
<rect x="544.10" y="397.05" width="11.25" height="4.15" fill="#efc391"/>
<rect x="501.50" y="400.60" width="7.70" height="4.15" fill="#efc391"/>
<rect x="512.15" y="400.60" width="4.15" height="4.15" fill="#5a2820"/>
<rect x="515.70" y="400.60" width="25.45" height="4.15" fill="#b93a2d"/>
<rect x="544.10" y="400.60" width="7.70" height="4.15" fill="#efc391"/>
<rect x="505.05" y="404.15" width="4.15" height="4.15" fill="#efc391"/>
<rect x="512.15" y="404.15" width="4.15" height="4.15" fill="#5a2820"/>
<rect x="515.70" y="404.15" width="25.45" height="4.15" fill="#b93a2d"/>
<rect x="505.05" y="407.70" width="7.70" height="4.15" fill="#efc391"/>
<rect x="512.15" y="407.70" width="4.15" height="4.15" fill="#5a2820"/>
<rect x="515.70" y="407.70" width="25.45" height="4.15" fill="#b93a2d"/>
<rect x="505.05" y="411.25" width="7.70" height="4.15" fill="#efc391"/>
<rect x="515.70" y="411.25" width="25.45" height="4.15" fill="#b93a2d"/>
<rect x="515.70" y="414.80" width="25.45" height="4.15" fill="#44439c"/>
<rect x="519.25" y="418.35" width="7.70" height="4.15" fill="#44439c"/>
<rect x="526.35" y="418.35" width="7.70" height="4.15" fill="#6451ad"/>
<rect x="533.45" y="418.35" width="7.70" height="4.15" fill="#44439c"/>
<rect x="526.35" y="421.90" width="14.80" height="4.15" fill="#44439c"/>
<rect x="519.25" y="425.45" width="7.70" height="4.15" fill="#6d2f1e"/>
<rect x="526.35" y="425.45" width="11.25" height="4.15" fill="#44439c"/>
<rect x="519.25" y="429.00" width="4.15" height="4.15" fill="#6d2f1e"/>
<rect x="522.80" y="429.00" width="4.15" height="4.15" fill="#44191a"/>
<rect x="526.35" y="429.00" width="11.25" height="4.15" fill="#6d2f1e"/>
<rect x="519.25" y="432.55" width="4.15" height="4.15" fill="#44191a"/>
<rect x="526.35" y="432.55" width="11.25" height="4.15" fill="#6d2f1e"/>
<rect x="138.50" y="518.00" width="29.00" height="4.15" fill="#7c4224"/>
<rect x="131.40" y="521.55" width="7.70" height="4.15" fill="#7c4224"/>
<rect x="138.50" y="521.55" width="29.00" height="4.15" fill="#5e2b23"/>
<rect x="166.90" y="521.55" width="7.70" height="4.15" fill="#7c4224"/>
<rect x="127.85" y="525.10" width="4.15" height="4.15" fill="#7c4224"/>
<rect x="131.40" y="525.10" width="43.20" height="4.15" fill="#5e2b23"/>
<rect x="174.00" y="525.10" width="4.15" height="4.15" fill="#7c4224"/>
<rect x="124.30" y="528.65" width="4.15" height="4.15" fill="#7c4224"/>
<rect x="127.85" y="528.65" width="46.75" height="4.15" fill="#5e2b23"/>
<rect x="174.00" y="528.65" width="4.15" height="4.15" fill="#7c4224"/>
<rect x="124.30" y="532.20" width="4.15" height="4.15" fill="#7c4224"/>
<rect x="127.85" y="532.20" width="46.75" height="4.15" fill="#5e2b23"/>
<rect x="174.00" y="532.20" width="4.15" height="4.15" fill="#7c4224"/>
<rect x="124.30" y="535.75" width="4.15" height="4.15" fill="#7c4224"/>
<rect x="127.85" y="535.75" width="21.90" height="4.15" fill="#5e2b23"/>
<rect x="149.15" y="535.75" width="11.25" height="4.15" fill="#efc391"/>
<rect x="159.80" y="535.75" width="11.25" height="4.15" fill="#5e2b23"/>
<rect x="170.45" y="535.75" width="4.15" height="4.15" fill="#efc391"/>
<rect x="174.00" y="535.75" width="4.15" height="4.15" fill="#7c4224"/>
<rect x="124.30" y="539.30" width="4.15" height="4.15" fill="#7c4224"/>
<rect x="127.85" y="539.30" width="14.80" height="4.15" fill="#5e2b23"/>
<rect x="142.05" y="539.30" width="32.55" height="4.15" fill="#efc391"/>
<rect x="174.00" y="539.30" width="4.15" height="4.15" fill="#7c4224"/>
<rect x="124.30" y="542.85" width="4.15" height="4.15" fill="#7c4224"/>
<rect x="127.85" y="542.85" width="4.15" height="4.15" fill="#5e2b23"/>
<rect x="131.40" y="542.85" width="4.15" height="4.15" fill="#efc391"/>
<rect x="134.95" y="542.85" width="7.70" height="4.15" fill="#5e2b23"/>
<rect x="142.05" y="542.85" width="7.70" height="4.15" fill="#efc391"/>
<rect x="149.15" y="542.85" width="4.15" height="4.15" fill="#2b1b31"/>
<rect x="152.70" y="542.85" width="14.80" height="4.15" fill="#efc391"/>
<rect x="166.90" y="542.85" width="4.15" height="4.15" fill="#2b1b31"/>
<rect x="170.45" y="542.85" width="4.15" height="4.15" fill="#efc391"/>
<rect x="124.30" y="546.40" width="7.70" height="4.15" fill="#5e2b23"/>
<rect x="131.40" y="546.40" width="7.70" height="4.15" fill="#efc391"/>
<rect x="138.50" y="546.40" width="4.15" height="4.15" fill="#5e2b23"/>
<rect x="142.05" y="546.40" width="7.70" height="4.15" fill="#efc391"/>
<rect x="149.15" y="546.40" width="4.15" height="4.15" fill="#2b1b31"/>
<rect x="152.70" y="546.40" width="14.80" height="4.15" fill="#efc391"/>
<rect x="166.90" y="546.40" width="4.15" height="4.15" fill="#2b1b31"/>
<rect x="170.45" y="546.40" width="4.15" height="4.15" fill="#efc391"/>
<rect x="124.30" y="549.95" width="11.25" height="4.15" fill="#4b201d"/>
<rect x="134.95" y="549.95" width="39.65" height="4.15" fill="#efc391"/>
<rect x="127.85" y="553.50" width="7.70" height="4.15" fill="#4b201d"/>
<rect x="134.95" y="553.50" width="14.80" height="4.15" fill="#efc391"/>
<rect x="149.15" y="553.50" width="18.35" height="4.15" fill="#2f1a33"/>
<rect x="166.90" y="553.50" width="7.70" height="4.15" fill="#efc391"/>
<rect x="131.40" y="557.05" width="4.15" height="4.15" fill="#4b201d"/>
<rect x="134.95" y="557.05" width="14.80" height="4.15" fill="#efc391"/>
<rect x="149.15" y="557.05" width="18.35" height="4.15" fill="#2f1a33"/>
<rect x="166.90" y="557.05" width="7.70" height="4.15" fill="#efc391"/>
<rect x="134.95" y="560.60" width="18.35" height="4.15" fill="#efc391"/>
<rect x="152.70" y="560.60" width="7.70" height="4.15" fill="#c8412e"/>
<rect x="159.80" y="560.60" width="4.15" height="4.15" fill="#2f1a33"/>
<rect x="163.35" y="560.60" width="7.70" height="4.15" fill="#efc391"/>
<rect x="134.95" y="564.15" width="36.10" height="4.15" fill="#efc391"/>
<rect x="134.95" y="567.70" width="7.70" height="4.15" fill="#5a2820"/>
<rect x="142.05" y="567.70" width="18.35" height="4.15" fill="#efc391"/>
<rect x="159.80" y="567.70" width="4.15" height="4.15" fill="#5a2820"/>
<rect x="131.40" y="571.25" width="7.70" height="4.15" fill="#b93a2d"/>
<rect x="138.50" y="571.25" width="4.15" height="4.15" fill="#5a2820"/>
<rect x="142.05" y="571.25" width="4.15" height="4.15" fill="#b93a2d"/>
<rect x="145.60" y="571.25" width="14.80" height="4.15" fill="#efc391"/>
<rect x="159.80" y="571.25" width="4.15" height="4.15" fill="#5a2820"/>
<rect x="163.35" y="571.25" width="4.15" height="4.15" fill="#b93a2d"/>
<rect x="131.40" y="574.80" width="7.70" height="4.15" fill="#b93a2d"/>
<rect x="138.50" y="574.80" width="4.15" height="4.15" fill="#5a2820"/>
<rect x="142.05" y="574.80" width="7.70" height="4.15" fill="#b93a2d"/>
<rect x="149.15" y="574.80" width="7.70" height="4.15" fill="#efc391"/>
<rect x="156.25" y="574.80" width="4.15" height="4.15" fill="#b93a2d"/>
<rect x="159.80" y="574.80" width="4.15" height="4.15" fill="#5a2820"/>
<rect x="163.35" y="574.80" width="4.15" height="4.15" fill="#b93a2d"/>
<rect x="174.00" y="574.80" width="7.70" height="4.15" fill="#efc391"/>
<rect x="131.40" y="578.35" width="7.70" height="4.15" fill="#efc391"/>
<rect x="138.50" y="578.35" width="4.15" height="4.15" fill="#5a2820"/>
<rect x="142.05" y="578.35" width="18.35" height="4.15" fill="#b93a2d"/>
<rect x="159.80" y="578.35" width="4.15" height="4.15" fill="#5a2820"/>
<rect x="166.90" y="578.35" width="14.80" height="4.15" fill="#efc391"/>
<rect x="131.40" y="581.90" width="7.70" height="4.15" fill="#efc391"/>
<rect x="138.50" y="581.90" width="4.15" height="4.15" fill="#5a2820"/>
<rect x="142.05" y="581.90" width="21.90" height="4.15" fill="#b93a2d"/>
<rect x="163.35" y="581.90" width="14.80" height="4.15" fill="#efc391"/>
<rect x="131.40" y="585.45" width="11.25" height="4.15" fill="#efc391"/>
<rect x="142.05" y="585.45" width="21.90" height="4.15" fill="#b93a2d"/>
<rect x="131.40" y="589.00" width="4.15" height="4.15" fill="#44191a"/>
<rect x="134.95" y="589.00" width="18.35" height="4.15" fill="#efc391"/>
<rect x="152.70" y="589.00" width="11.25" height="4.15" fill="#b93a2d"/>
<rect x="134.95" y="592.55" width="4.15" height="4.15" fill="#44191a"/>
<rect x="138.50" y="592.55" width="11.25" height="4.15" fill="#efc391"/>
<rect x="149.15" y="592.55" width="14.80" height="4.15" fill="#b93a2d"/>
<rect x="138.50" y="596.10" width="25.45" height="4.15" fill="#44439c"/>
<rect x="138.50" y="599.65" width="4.15" height="4.15" fill="#44439c"/>
<rect x="142.05" y="599.65" width="4.15" height="4.15" fill="#2f3279"/>
<rect x="145.60" y="599.65" width="11.25" height="4.15" fill="#44439c"/>
<rect x="156.25" y="599.65" width="4.15" height="4.15" fill="#2f3279"/>
<rect x="159.80" y="599.65" width="4.15" height="4.15" fill="#44439c"/>
<rect x="138.50" y="603.20" width="11.25" height="4.15" fill="#44439c"/>
<rect x="149.15" y="603.20" width="7.70" height="4.15" fill="#f4f4fa"/>
<rect x="156.25" y="603.20" width="7.70" height="4.15" fill="#44439c"/>
<rect x="142.05" y="606.75" width="7.70" height="4.15" fill="#44439c"/>
<rect x="149.15" y="606.75" width="4.15" height="4.15" fill="#f4f4fa"/>
<rect x="152.70" y="606.75" width="11.25" height="4.15" fill="#44439c"/>
<rect x="142.05" y="610.30" width="18.35" height="4.15" fill="#44439c"/>
<rect x="142.05" y="613.85" width="11.25" height="4.15" fill="#2f3279"/>
<rect x="142.05" y="617.40" width="7.70" height="4.15" fill="#6d2f1e"/>
<rect x="142.05" y="620.95" width="11.25" height="4.15" fill="#6d2f1e"/>
<rect x="320.40" y="521.60" width="29.00" height="4.15" fill="#7c4224"/>
<rect x="313.30" y="525.15" width="7.70" height="4.15" fill="#7c4224"/>
<rect x="320.40" y="525.15" width="29.00" height="4.15" fill="#5e2b23"/>
<rect x="348.80" y="525.15" width="7.70" height="4.15" fill="#7c4224"/>
<rect x="309.75" y="528.70" width="4.15" height="4.15" fill="#7c4224"/>
<rect x="313.30" y="528.70" width="43.20" height="4.15" fill="#5e2b23"/>
<rect x="355.90" y="528.70" width="4.15" height="4.15" fill="#7c4224"/>
<rect x="306.20" y="532.25" width="4.15" height="4.15" fill="#7c4224"/>
<rect x="309.75" y="532.25" width="46.75" height="4.15" fill="#5e2b23"/>
<rect x="355.90" y="532.25" width="4.15" height="4.15" fill="#7c4224"/>
<rect x="306.20" y="535.80" width="4.15" height="4.15" fill="#7c4224"/>
<rect x="309.75" y="535.80" width="46.75" height="4.15" fill="#5e2b23"/>
<rect x="355.90" y="535.80" width="4.15" height="4.15" fill="#7c4224"/>
<rect x="306.20" y="539.35" width="4.15" height="4.15" fill="#7c4224"/>
<rect x="309.75" y="539.35" width="21.90" height="4.15" fill="#5e2b23"/>
<rect x="331.05" y="539.35" width="11.25" height="4.15" fill="#efc391"/>
<rect x="341.70" y="539.35" width="11.25" height="4.15" fill="#5e2b23"/>
<rect x="352.35" y="539.35" width="4.15" height="4.15" fill="#efc391"/>
<rect x="355.90" y="539.35" width="4.15" height="4.15" fill="#7c4224"/>
<rect x="306.20" y="542.90" width="4.15" height="4.15" fill="#7c4224"/>
<rect x="309.75" y="542.90" width="14.80" height="4.15" fill="#5e2b23"/>
<rect x="323.95" y="542.90" width="32.55" height="4.15" fill="#efc391"/>
<rect x="355.90" y="542.90" width="4.15" height="4.15" fill="#7c4224"/>
<rect x="306.20" y="546.45" width="4.15" height="4.15" fill="#7c4224"/>
<rect x="309.75" y="546.45" width="4.15" height="4.15" fill="#5e2b23"/>
<rect x="313.30" y="546.45" width="4.15" height="4.15" fill="#efc391"/>
<rect x="316.85" y="546.45" width="7.70" height="4.15" fill="#5e2b23"/>
<rect x="323.95" y="546.45" width="7.70" height="4.15" fill="#efc391"/>
<rect x="331.05" y="546.45" width="4.15" height="4.15" fill="#2b1b31"/>
<rect x="334.60" y="546.45" width="14.80" height="4.15" fill="#efc391"/>
<rect x="348.80" y="546.45" width="4.15" height="4.15" fill="#2b1b31"/>
<rect x="352.35" y="546.45" width="4.15" height="4.15" fill="#efc391"/>
<rect x="306.20" y="550.00" width="7.70" height="4.15" fill="#5e2b23"/>
<rect x="313.30" y="550.00" width="7.70" height="4.15" fill="#efc391"/>
<rect x="320.40" y="550.00" width="4.15" height="4.15" fill="#5e2b23"/>
<rect x="323.95" y="550.00" width="7.70" height="4.15" fill="#efc391"/>
<rect x="331.05" y="550.00" width="4.15" height="4.15" fill="#2b1b31"/>
<rect x="334.60" y="550.00" width="14.80" height="4.15" fill="#efc391"/>
<rect x="348.80" y="550.00" width="4.15" height="4.15" fill="#2b1b31"/>
<rect x="352.35" y="550.00" width="4.15" height="4.15" fill="#efc391"/>
<rect x="306.20" y="553.55" width="11.25" height="4.15" fill="#4b201d"/>
<rect x="316.85" y="553.55" width="39.65" height="4.15" fill="#efc391"/>
<rect x="309.75" y="557.10" width="7.70" height="4.15" fill="#4b201d"/>
<rect x="316.85" y="557.10" width="14.80" height="4.15" fill="#efc391"/>
<rect x="331.05" y="557.10" width="18.35" height="4.15" fill="#2f1a33"/>
<rect x="348.80" y="557.10" width="7.70" height="4.15" fill="#efc391"/>
<rect x="313.30" y="560.65" width="4.15" height="4.15" fill="#4b201d"/>
<rect x="316.85" y="560.65" width="14.80" height="4.15" fill="#efc391"/>
<rect x="331.05" y="560.65" width="18.35" height="4.15" fill="#2f1a33"/>
<rect x="348.80" y="560.65" width="7.70" height="4.15" fill="#efc391"/>
<rect x="316.85" y="564.20" width="18.35" height="4.15" fill="#efc391"/>
<rect x="334.60" y="564.20" width="7.70" height="4.15" fill="#c8412e"/>
<rect x="341.70" y="564.20" width="4.15" height="4.15" fill="#2f1a33"/>
<rect x="345.25" y="564.20" width="7.70" height="4.15" fill="#efc391"/>
<rect x="316.85" y="567.75" width="36.10" height="4.15" fill="#efc391"/>
<rect x="316.85" y="571.30" width="7.70" height="4.15" fill="#5a2820"/>
<rect x="323.95" y="571.30" width="18.35" height="4.15" fill="#efc391"/>
<rect x="341.70" y="571.30" width="4.15" height="4.15" fill="#5a2820"/>
<rect x="313.30" y="574.85" width="7.70" height="4.15" fill="#b93a2d"/>
<rect x="320.40" y="574.85" width="4.15" height="4.15" fill="#5a2820"/>
<rect x="323.95" y="574.85" width="18.35" height="4.15" fill="#efc391"/>
<rect x="341.70" y="574.85" width="4.15" height="4.15" fill="#5a2820"/>
<rect x="345.25" y="574.85" width="4.15" height="4.15" fill="#b93a2d"/>
<rect x="313.30" y="578.40" width="7.70" height="4.15" fill="#b93a2d"/>
<rect x="320.40" y="578.40" width="18.35" height="4.15" fill="#efc391"/>
<rect x="338.15" y="578.40" width="4.15" height="4.15" fill="#b93a2d"/>
<rect x="341.70" y="578.40" width="4.15" height="4.15" fill="#5a2820"/>
<rect x="345.25" y="578.40" width="4.15" height="4.15" fill="#b93a2d"/>
<rect x="313.30" y="581.95" width="4.15" height="4.15" fill="#b93a2d"/>
<rect x="316.85" y="581.95" width="14.80" height="4.15" fill="#efc391"/>
<rect x="331.05" y="581.95" width="11.25" height="4.15" fill="#b93a2d"/>
<rect x="341.70" y="581.95" width="4.15" height="4.15" fill="#5a2820"/>
<rect x="313.30" y="585.50" width="4.15" height="4.15" fill="#5a2820"/>
<rect x="316.85" y="585.50" width="11.25" height="4.15" fill="#efc391"/>
<rect x="327.50" y="585.50" width="14.80" height="4.15" fill="#b93a2d"/>
<rect x="341.70" y="585.50" width="4.15" height="4.15" fill="#5a2820"/>
<rect x="313.30" y="589.05" width="7.70" height="4.15" fill="#5a2820"/>
<rect x="320.40" y="589.05" width="25.45" height="4.15" fill="#b93a2d"/>
<rect x="345.25" y="589.05" width="11.25" height="4.15" fill="#efc391"/>
<rect x="313.30" y="592.60" width="7.70" height="4.15" fill="#5a2820"/>
<rect x="320.40" y="592.60" width="25.45" height="4.15" fill="#b93a2d"/>
<rect x="345.25" y="592.60" width="7.70" height="4.15" fill="#efc391"/>
<rect x="316.85" y="596.15" width="4.15" height="4.15" fill="#5a2820"/>
<rect x="320.40" y="596.15" width="25.45" height="4.15" fill="#b93a2d"/>
<rect x="320.40" y="599.70" width="29.00" height="4.15" fill="#44439c"/>
<rect x="320.40" y="603.25" width="7.70" height="4.15" fill="#44439c"/>
<rect x="327.50" y="603.25" width="18.35" height="4.15" fill="#2f3279"/>
<rect x="345.25" y="603.25" width="7.70" height="4.15" fill="#44439c"/>
<rect x="320.40" y="606.80" width="7.70" height="4.15" fill="#44439c"/>
<rect x="345.25" y="606.80" width="7.70" height="4.15" fill="#44439c"/>
<rect x="316.85" y="610.35" width="11.25" height="4.15" fill="#44439c"/>
<rect x="345.25" y="610.35" width="7.70" height="4.15" fill="#44439c"/>
<rect x="316.85" y="613.90" width="7.70" height="4.15" fill="#44439c"/>
<rect x="345.25" y="613.90" width="7.70" height="4.15" fill="#44191a"/>
<rect x="316.85" y="617.45" width="7.70" height="4.15" fill="#2f3279"/>
<rect x="345.25" y="617.45" width="11.25" height="4.15" fill="#6d2f1e"/>
<rect x="316.85" y="621.00" width="7.70" height="4.15" fill="#6d2f1e"/>
<rect x="316.85" y="624.55" width="11.25" height="4.15" fill="#6d2f1e"/>
</svg>
<div class="abs" id="menubar"></div><div class="abs" id="mline"></div><div class="abs" id="ctrl"></div><div class="abs" id="cline"></div><div class="abs" id="tabbar"></div><div class="abs" id="tab1"></div><div class="abs" id="tab2"></div><div class="abs" id="tools"></div><div class="abs" id="toolhdr"></div><div class="abs" id="toolbrd"></div><div class="abs" id="tooledge"></div><div class="abs" style="left:80.5px;top:32.8px;width:14.6px;height:14.6px;background:#808080;border:1px solid #d6d6d6"></div><div class="dd" style="left:98.2px;top:33.5px;width:13.7px;height:14.8px"></div><div class="abs" style="left:118.3px;top:32.9px;width:16.2px;height:16px;background:#fff"></div><div class="dd" style="left:135.8px;top:33.5px;width:14px;height:14.8px"></div><div class="dd" style="left:192.7px;top:32.7px;width:15px;height:16px"></div><div class="inp" style="left:208.7px;top:32.7px;width:36.9px;height:16px"></div><div class="dd" style="left:246.2px;top:32.7px;width:14.6px;height:16px"></div><div class="abs" style="left:266px;top:32px;width:77px;height:17px;background:#808080"></div><div class="abs" style="left:343px;top:32px;width:18px;height:17px;background:#5e5e5e"></div><div class="abs" style="left:364px;top:32.3px;width:74.4px;height:16.5px;background:#f0f0f0"></div><div class="abs" style="left:367px;top:35.5px;width:11px;height:11px;border-radius:50%;background:#000"></div><div class="dd" style="left:438.6px;top:32.3px;width:14px;height:16px"></div><div class="inp" style="left:496.4px;top:33.5px;width:42px;height:14.5px"></div><div class="inp" style="left:539.8px;top:33.5px;width:12.2px;height:14.5px"></div><div class="abs" style="left:585.6px;top:32.3px;width:16.8px;height:16.8px;background:#e6e6e6"></div><div class="dd" style="left:603.2px;top:32.5px;width:13.6px;height:15.6px"></div><div class="abs" style="left:621.8px;top:32.8px;width:2.2px;height:16px;background:#444"></div><div class="t" style="left:8.5px;top:3.5px;font-size:17.3px;color:#d09a72;transform:scaleX(0.9621);-webkit-text-stroke:0.35px #d09a72;">Ai</div><div class="t" style="left:77px;top:7.6px;font-size:10.6px;color:#dedede;transform:scaleX(0.8606);-webkit-text-stroke:0.25px #dedede;">File</div><div class="t" style="left:105.3px;top:7.6px;font-size:10.6px;color:#dedede;transform:scaleX(0.9033);-webkit-text-stroke:0.25px #dedede;">Edit</div><div class="t" style="left:135px;top:7.6px;font-size:10.6px;color:#dedede;transform:scaleX(0.9564);-webkit-text-stroke:0.25px #dedede;">Object</div><div class="t" style="left:178px;top:7.6px;font-size:10.6px;color:#dedede;transform:scaleX(0.9138);-webkit-text-stroke:0.25px #dedede;">Type</div><div class="t" style="left:212px;top:7.6px;font-size:10.6px;color:#dedede;transform:scaleX(0.8995);-webkit-text-stroke:0.25px #dedede;">Select</div><div class="t" style="left:251px;top:7.6px;font-size:10.6px;color:#dedede;transform:scaleX(0.9476);-webkit-text-stroke:0.25px #dedede;">Effect</div><div class="t" style="left:289px;top:7.6px;font-size:10.6px;color:#dedede;transform:scaleX(0.9436);-webkit-text-stroke:0.25px #dedede;">View</div><div class="t" style="left:322px;top:7.6px;font-size:10.6px;color:#dedede;transform:scaleX(0.9814);-webkit-text-stroke:0.25px #dedede;">Window</div><div class="t" style="left:372px;top:7.6px;font-size:10.6px;color:#dedede;transform:scaleX(0.8945);-webkit-text-stroke:0.25px #dedede;">Help</div><div class="t" style="left:12.9px;top:37.6px;font-size:9.1px;color:#d2d2d2;transform:scaleX(0.8993);-webkit-text-stroke:0.2px #d2d2d2;">No Selection</div><div class="t" style="left:160.6px;top:37.6px;font-size:9.1px;color:#e6e6e6;transform:scaleX(0.9158);-webkit-text-stroke:0.2px #e6e6e6;">Stroke:</div><div class="t" style="left:385.2px;top:37.2px;font-size:9.6px;color:#161616;transform:scaleX(0.8558);-webkit-text-stroke:0.2px #161616;">Touch Callig...</div><div class="t" style="left:459px;top:37.6px;font-size:9.1px;color:#e6e6e6;transform:scaleX(0.9737);-webkit-text-stroke:0.2px #e6e6e6;">Opacity:</div><div class="t" style="left:498.6px;top:37.6px;font-size:9.1px;color:#e6e6e6;transform:scaleX(0.9796);-webkit-text-stroke:0.2px #e6e6e6;">100%</div><div class="abs" style="left:160.6px;top:46px;width:26.4px;height:0;border-top:1px dotted #cfcfcf"></div><div class="abs" style="left:459px;top:46px;width:32.5px;height:0;border-top:1px dotted #cfcfcf"></div><div class="t" style="left:560.4px;top:37.6px;font-size:9.1px;color:#b4b4b4;transform:scaleX(0.8568);-webkit-text-stroke:0.2px #b4b4b4;">Style:</div><div class="t" style="left:44px;top:63.8px;font-size:9.3px;color:#b4b4b4;font-weight:bold;transform:scaleX(0.9945);">AdobeStock_184392269 [Converted].ai* @ 150% (RGB/GPU Preview)</div><div class="t" style="left:380.5px;top:63.8px;font-size:9.3px;color:#ececec;font-weight:bold;transform:scaleX(1.0090);">8-bit Walk* @ 100% (CMYK/GPU Preview)</div>
<svg class="canvas" width="624" height="656" viewBox="0 0 624 656"><path d="M44 6.6 L36.2 13.8 L38.2 13.8 L38.2 19.7 L42.3 19.7 L42.3 15.3 L45.8 15.3 L45.8 19.7 L49.9 19.7 L49.9 13.8 L51.9 13.8 L48.9 11 L48.9 8 L47.3 8 L47.3 9.6 Z" fill="#d8d8d8"/><rect x="62.9" y="4" width="1" height="18" fill="#404040"/><rect x="402.5" y="4" width="1" height="19" fill="#3c3c3c"/><rect x="413.5" y="8.3" width="6" height="9" fill="#d0d0d0"/><rect x="420.7" y="8.3" width="7" height="4" fill="#d0d0d0"/><rect x="420.7" y="13.3" width="7" height="4" fill="#d0d0d0"/><polyline points="435.6,10.8 438.3,13.8 441.0,10.8" fill="none" stroke="#e6e6e6" stroke-width="1.6" stroke-linecap="round" stroke-linejoin="round"/><rect x="457.4" y="7.6" width="13.8" height="10.6" fill="none" stroke="#c8c8c8" stroke-width="1.2"/><path d="M462.2 17 L460.6 15 Q461.2 13.8 462.4 14.6 L462.4 10.4 Q463.4 9.2 464.5 10.4 L464.5 13.4 L468 14.2 Q469.3 14.6 469.1 16 L468.6 19.6 L463.6 19.6 Z" fill="#dcdcdc" stroke="#484848" stroke-width="0.5"/><rect x="2.5" y="31" width="1" height="1" fill="#3a3a3a"/><rect x="2.5" y="33" width="1" height="1" fill="#3a3a3a"/><rect x="2.5" y="35" width="1" height="1" fill="#3a3a3a"/><rect x="2.5" y="37" width="1" height="1" fill="#3a3a3a"/><rect x="2.5" y="39" width="1" height="1" fill="#3a3a3a"/><rect x="2.5" y="41" width="1" height="1" fill="#3a3a3a"/><rect x="2.5" y="43" width="1" height="1" fill="#3a3a3a"/><rect x="2.5" y="45" width="1" height="1" fill="#3a3a3a"/><rect x="2.5" y="47" width="1" height="1" fill="#3a3a3a"/><rect x="2.5" y="49" width="1" height="1" fill="#3a3a3a"/><rect x="2.5" y="51" width="1" height="1" fill="#3a3a3a"/><polyline points="102.4,39.5 105.2,42.5 108.0,39.5" fill="none" stroke="#e6e6e6" stroke-width="1.5" stroke-linecap="round" stroke-linejoin="round"/><polyline points="140.0,39.5 142.8,42.5 145.6,39.5" fill="none" stroke="#e6e6e6" stroke-width="1.5" stroke-linecap="round" stroke-linejoin="round"/><polyline points="250.4,39.5 253.20000000000002,42.5 256.0,39.5" fill="none" stroke="#e6e6e6" stroke-width="1.5" stroke-linecap="round" stroke-linejoin="round"/><polyline points="442.8,39.5 445.6,42.5 448.40000000000003,39.5" fill="none" stroke="#e6e6e6" stroke-width="1.5" stroke-linecap="round" stroke-linejoin="round"/><polyline points="607.2,39.5 610.0,42.5 612.8000000000001,39.5" fill="none" stroke="#e6e6e6" stroke-width="1.5" stroke-linecap="round" stroke-linejoin="round"/><polyline points="347.8,39.4 350.6,42.4 353.40000000000003,39.4" fill="none" stroke="#7c7c7c" stroke-width="1.4" stroke-linecap="round" stroke-linejoin="round"/><polyline points="197.4,38.2 200.2,35.5 203,38.2" fill="none" stroke="#e6e6e6" stroke-width="1.3" stroke-linecap="round" stroke-linejoin="round"/><polyline points="197.4,43.4 200.2,46.1 203,43.4" fill="none" stroke="#e6e6e6" stroke-width="1.3" stroke-linecap="round" stroke-linejoin="round"/><polyline points="544.8,38.2 547.8,41 544.8,43.8" fill="none" stroke="#e6e6e6" stroke-width="1.4" stroke-linecap="round" stroke-linejoin="round"/><rect x="123.9" y="38.7" width="4.6" height="4.6" fill="none" stroke="#111" stroke-width="1.2"/><line x1="119" y1="48.3" x2="134.4" y2="33.6" stroke="#d81822" stroke-width="1.8"/><path d="M359.7 64.4 L364.90000000000003 69.6 M364.90000000000003 64.4 L359.7 69.6" stroke="#b0b0b0" stroke-width="1.1" fill="none"/><path d="M579.6999999999999 64.4 L584.9 69.6 M584.9 64.4 L579.6999999999999 69.6" stroke="#e0e0e0" stroke-width="1.1" fill="none"/><polyline points="5,58 7,60 5,62" fill="none" stroke="#dcdcdc" stroke-width="1.1"/><polyline points="8.3,58 10.3,60 8.3,62" fill="none" stroke="#dcdcdc" stroke-width="1.1"/><rect x="8" y="68.3" width="1.2" height="3" fill="#3e3e3e"/><rect x="10" y="68.3" width="1.2" height="3" fill="#3e3e3e"/><rect x="12" y="68.3" width="1.2" height="3" fill="#3e3e3e"/><rect x="14" y="68.3" width="1.2" height="3" fill="#3e3e3e"/><rect x="16" y="68.3" width="1.2" height="3" fill="#3e3e3e"/><rect x="18" y="68.3" width="1.2" height="3" fill="#3e3e3e"/><rect x="20" y="68.3" width="1.2" height="3" fill="#3e3e3e"/><rect x="22" y="68.3" width="1.2" height="3" fill="#3e3e3e"/><rect x="24" y="68.3" width="1.2" height="3" fill="#3e3e3e"/><path d="M12.9 86 L12.9 98.2 L16.2 95.3 L22.2 94.4 Z" fill="none" stroke="#d6d6d6" stroke-width="1.2" stroke-linejoin="miter"/><rect x="6" y="103.4" width="22.8" height="17.4" rx="1.5" fill="#2e2e2e"/><path d="M12.8 104.6 L12.8 119.2 L16.6 115.6 L22.8 114.4 Z" fill="#e4e4e4"/><path d="M28.4 118.0 L28.4 120.6 L25.799999999999997 120.6 Z" fill="#d6d6d6"/><g transform="translate(9.8,126.3)"><path d="M0 12.3 L1.6 5.2 L6.2 2.2 L10.2 6.2 L7.2 10.8 Z" fill="#d6d6d6"/><path d="M7.2 1.4 L9.2 -0.6 L13.2 3.4 L11.2 5.4 Z" fill="#d6d6d6"/><path d="M0.6 11.8 L4.6 7.8" stroke="#505050" stroke-width="0.9"/><circle cx="5.2" cy="7.2" r="1" fill="#505050"/></g><path d="M28.4 138.4 L28.4 141 L25.799999999999997 141 Z" fill="#d6d6d6"/><g transform="translate(12,146.5)"><path d="M0 12.3 L1.6 5.2 L6.2 2.2 L10.2 6.2 L7.2 10.8 Z" fill="#d6d6d6"/><path d="M7.2 1.4 L9.2 -0.6 L13.2 3.4 L11.2 5.4 Z" fill="#d6d6d6"/><path d="M0.6 11.8 L4.6 7.8" stroke="#505050" stroke-width="0.9"/><circle cx="5.2" cy="7.2" r="1" fill="#505050"/></g><path d="M10.8 147.5 Q12.6 149.5 10.4 152.5 Q8 156 10.5 158.5 Q12 159.6 13.5 158.6" fill="none" stroke="#d6d6d6" stroke-width="1.1"/><rect x="10.6" y="167.8" width="13" height="11" fill="#707070" stroke="#d6d6d6" stroke-width="1.1"/><path d="M28.4 179.4 L28.4 182 L25.799999999999997 182 Z" fill="#d6d6d6"/><path d="M22.9 186.8 L24 187.7 L18.5 196 L16 194 Z" fill="#d6d6d6"/><path d="M15.1 194.9 L17.7 197.1 Q17.4 200.6 9.8 200.2 Q12.2 198.8 12.5 197.2 Q13 195 15.1 194.9 Z" fill="#d6d6d6"/><path d="M28.4 200.0 L28.4 202.6 L25.799999999999997 202.6 Z" fill="#d6d6d6"/><path d="M11 208.8 L23 208.8 L23 212 L22 212 L21.6 210.4 L18 210.4 L18 218.4 L19.8 218.8 L19.8 219.8 L14.2 219.8 L14.2 218.8 L16 218.4 L16 210.4 L12.4 210.4 L12 212 L11 212 Z" fill="#d6d6d6"/><path d="M28.4 220.6 L28.4 223.2 L25.799999999999997 223.2 Z" fill="#d6d6d6"/><rect x="13.6" y="228.4" width="10.4" height="8.2" fill="none" stroke="#d6d6d6" stroke-width="1.1"/><rect x="9.6" y="234.4" width="7.6" height="6.4" fill="#505050" stroke="#d6d6d6" stroke-width="1.1"/><path d="M18.4 234.2 L21.8 230.8 M19.4 230.6 L22 230.6 L22 233.2" fill="none" stroke="#d6d6d6" stroke-width="1"/><path d="M28.4 241.0 L28.4 243.6 L25.799999999999997 243.6 Z" fill="#d6d6d6"/><g transform="rotate(-50 17 255)"><rect x="10.4" y="250.6" width="13.4" height="9" rx="1.6" fill="#d6d6d6"/><rect x="11.6" y="253" width="1.8" height="4.2" rx="0.6" fill="#4a4a4a"/></g><path d="M28.4 261.4 L28.4 264 L25.799999999999997 264 Z" fill="#d6d6d6"/><ellipse cx="15.8" cy="274" rx="6.6" ry="4.8" fill="none" stroke="#d6d6d6" stroke-width="1.1"/><path d="M11.6 273.6 Q13.6 271 16.4 273 M13.8 271.8 L14.2 276.4" fill="none" stroke="#d6d6d6" stroke-width="0.9"/><path d="M19.4 274 L19.4 283 L21.6 280.8 L25.6 280.4 Z" fill="#d6d6d6" stroke="#505050" stroke-width="0.5"/><defs><linearGradient id="gr" x1="0" x2="1" y1="0" y2="0"><stop offset="0" stop-color="#3a3a3a"/><stop offset="1" stop-color="#d8d8d8"/></linearGradient></defs><rect x="10.4" y="290.4" width="13.4" height="11" fill="url(#gr)" stroke="#d6d6d6" stroke-width="1.1"/><path d="M28.4 302.0 L28.4 304.6 L25.799999999999997 304.6 Z" fill="#d6d6d6"/><path d="M10 322.6 L10.4 320.2 L17.6 313 L19.6 315 L12.4 322.2 Z" fill="none" stroke="#d6d6d6" stroke-width="1.1" stroke-linejoin="round"/><path d="M17 311.8 L18.6 310.2 L19.8 311.4 Q21 308.6 22.8 309.6 Q24.2 311 22 312.8 L23 314 L21.4 315.6 Z" fill="#d6d6d6"/><path d="M10.7 332.9 Q10.9 330.6 12.8 330.6 Q15.5 330.8 15.3 334.6 Q15.4 337.1 17.5 336.7 L19.7 331.9 L20.6 333.2 L19.5 335.9 Q21.4 334.6 23.4 334.3 Q25.5 334.8 25.2 337.2 L24.7 339.7 Q23.6 340.1 22.9 338.8 Q23.4 337 22.6 336.8 Q21.6 337 21 339.5 Q19.4 341.3 17.5 341.1 Q15.6 341 14.3 340.3 L12.2 340.9 L10 343.1 L8.8 341.2 L11.6 339.5 Q13 338.4 13 335.6 Q13 333.8 12.3 333.4 Q11.4 333.3 10.7 332.9 Z" fill="#d6d6d6"/><circle cx="14.5" cy="338" r="0.9" fill="#505050"/><rect x="9.4" y="351.4" width="6.4" height="6.4" fill="#bdbdbd" stroke="#d6d6d6" stroke-width="0.8"/><rect x="13.4" y="355" width="6.6" height="6.4" fill="#8a8a8a" stroke="#d6d6d6" stroke-width="1"/><circle cx="21" cy="359.6" r="3.4" fill="#505050" stroke="#d6d6d6" stroke-width="1.2"/><path d="M8.6 373.6 L15.4 373.6 M12.4 370.2 L12.4 383.4 L22.8 383.4 L22.8 376.6 L19.8 373.6 L15.4 373.6" fill="none" stroke="#d6d6d6" stroke-width="1.1"/><path d="M14.6 376.4 L21.2 376.4 L21.2 381.6 L14.6 381.6 Z" fill="#8a8a8a"/><circle cx="15.2" cy="396.6" r="4.6" fill="none" stroke="#d6d6d6" stroke-width="1.3"/><path d="M18.6 400 L23.6 405" stroke="#d6d6d6" stroke-width="1.6" stroke-linecap="round"/><path d="M28.4 404.4 L28.4 407 L25.799999999999997 407 Z" fill="#d6d6d6"/><rect x="8.6" y="418.2" width="5.4" height="5" fill="#111" stroke="#e0e0e0" stroke-width="1"/><rect x="5.6" y="415.2" width="5" height="4.8" fill="#fff" stroke="#111" stroke-width="0.9"/><rect x="4.9" y="414.5" width="6.4" height="6.2" fill="none" stroke="#dcdcdc" stroke-width="0.6"/><path d="M24.4 416.8 Q28.4 416.8 28.4 420.8" fill="none" stroke="#d6d6d6" stroke-width="1.9"/><path d="M22 416.8 L25.6 413.8 L25.6 419.8 Z" fill="#d6d6d6"/><path d="M28.4 424.2 L25.4 420.4 L31.4 420.4 Z" fill="#d6d6d6"/><rect x="13.6" y="438.4" width="15.6" height="15.6" fill="#fff"/><rect x="19.4" y="444.2" width="5.4" height="5.4" fill="#2a2a2a"/><path d="M14 453.6 L28.8 438.8" stroke="#d81822" stroke-width="2"/><rect x="5.4" y="430.8" width="15" height="15" fill="#808080" stroke="#cfcfcf" stroke-width="1"/><rect x="4.6" y="430" width="16.6" height="16.6" fill="none" stroke="#5a5a5a" stroke-width="0.6"/><rect x="6.2" y="461.4" width="6.6" height="6.6" fill="#8a8a8a"/><defs><linearGradient id="gr2" x1="0" x2="1" y1="0" y2="0"><stop offset="0" stop-color="#f4f4f4"/><stop offset="1" stop-color="#555"/></linearGradient></defs><rect x="13.8" y="461.4" width="6.6" height="6.6" fill="url(#gr2)"/><rect x="21.4" y="461.4" width="7" height="6.6" fill="#fff"/><path d="M21.8 467.8 L28 461.6" stroke="#d81822" stroke-width="1.7"/><circle cx="16" cy="479.6" r="3.6" fill="none" stroke="#d6d6d6" stroke-width="1.1"/><rect x="16.6" y="480.6" width="4.8" height="4.6" fill="#d6d6d6"/><rect x="9.6" y="499.6" width="10" height="7.4" fill="#505050" stroke="#d6d6d6" stroke-width="1.1"/><rect x="14.4" y="496.4" width="10" height="7.6" fill="#8a8a8a" stroke="#d6d6d6" stroke-width="1.1"/><rect x="14.4" y="496.4" width="10" height="2" fill="#d6d6d6"/><circle cx="12.8" cy="529.4" r="1.3" fill="#d6d6d6"/><circle cx="17.4" cy="529.4" r="1.3" fill="#d6d6d6"/><circle cx="22" cy="529.4" r="1.3" fill="#d6d6d6"/><rect x="0" y="541" width="33.5" height="1" fill="#454545"/></svg>
</body></html>
